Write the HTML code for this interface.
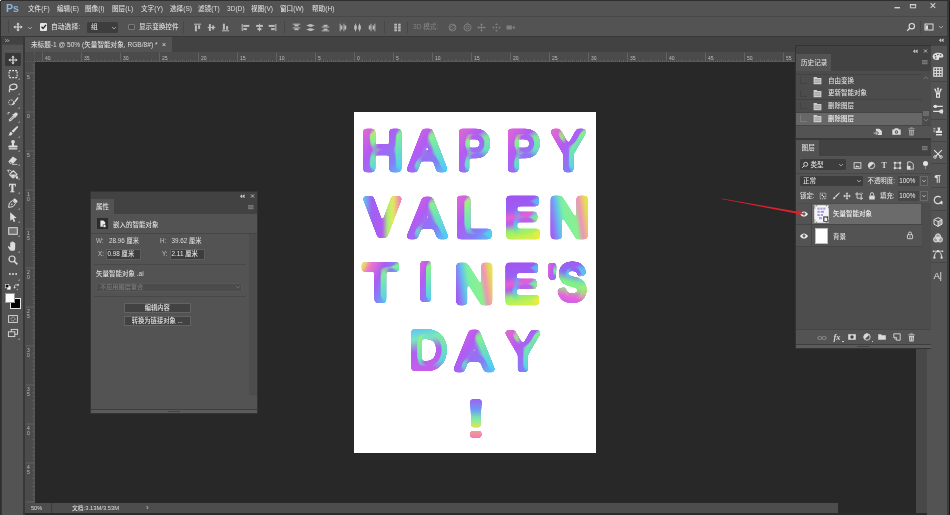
<!DOCTYPE html>
<html lang="zh-CN"><head><meta charset="utf-8"><title>Photoshop</title>
<style>
*{margin:0;padding:0;box-sizing:border-box}
html,body{width:950px;height:515px;overflow:hidden;background:#282828}
body{position:relative;-webkit-font-smoothing:antialiased;font-family:"Liberation Sans","Noto Sans CJK SC",sans-serif;font-size:6.6px;font-weight:500;color:#dedede;line-height:1}
.a{position:absolute}
.t{position:absolute;white-space:nowrap;line-height:8px;height:8px}
svg{position:absolute;overflow:visible}
.dim{color:#8a8a8a}
</style></head>
<body>
<div id="app" style="position:absolute;left:0;top:0;width:950px;height:515px;will-change:transform">
<div class="a" style="left:0px;top:0px;width:950px;height:515px;background:#282828;"></div>
<div class="a" style="left:0px;top:0px;width:950px;height:17px;background:#535353;"></div>
<div class="a" style="left:0px;top:16px;width:950px;height:1px;background:#484848;"></div>
<div class="t" style="left:6px;top:3px;height:11px;line-height:11px;font-size:10.6px;font-weight:bold;color:#8db4dc;letter-spacing:-0.1px">Ps</div>
<div class="t " style="left:28px;top:5px;">文件(F)</div>
<div class="t " style="left:57px;top:5px;">编辑(E)</div>
<div class="t " style="left:85px;top:5px;">图像(I)</div>
<div class="t " style="left:112px;top:5px;">图层(L)</div>
<div class="t " style="left:141px;top:5px;">文字(Y)</div>
<div class="t " style="left:170px;top:5px;">选择(S)</div>
<div class="t " style="left:198px;top:5px;">滤镜(T)</div>
<div class="t " style="left:227px;top:5px;">3D(D)</div>
<div class="t " style="left:251px;top:5px;">视图(V)</div>
<div class="t " style="left:280px;top:5px;">窗口(W)</div>
<div class="t " style="left:312px;top:5px;">帮助(H)</div>
<svg style="left:890px;top:0" width="60" height="17"><rect x="4.5" y="7" width="5.5" height="1.4" fill="#cfcfcf"/><rect x="20.4" y="4.6" width="5.2" height="3.2" fill="none" stroke="#cfcfcf" stroke-width="1"/><rect x="19.9" y="4" width="6.2" height="1.3" fill="#cfcfcf"/><path d="M40.6 3.2l4.6 4.6M45.2 3.2l-4.6 4.6" stroke="#cfcfcf" stroke-width="1.1" fill="none"/></svg>
<div class="a" style="left:0px;top:17px;width:950px;height:19px;background:#535353;"></div>
<div class="a" style="left:0px;top:36px;width:950px;height:1px;background:#383838;"></div>
<div class="a" style="left:0px;top:37px;width:950px;height:15px;background:#424242;"></div>
<div class="a" style="left:25px;top:37px;width:147px;height:15px;background:#535353;"></div>
<div class="t " style="left:31px;top:41px;">未标题-1 @ 50% (矢量智能对象, RGB/8#) *</div>
<div class="t " style="left:162px;top:41px;font-size:7px">×</div>
<div class="a" style="left:0px;top:37px;width:25px;height:478px;background:#383838;"></div>
<div class="a" style="left:2px;top:37px;width:21px;height:7px;background:#424242;"></div>
<svg style="left:5.2px;top:38.6px" width="6" height="4"><path d="M0.5 0.4l1.2 1.2-1.2 1.2M2.6 0.4l1.2 1.2-1.2 1.2" stroke="#d0d0d0" stroke-width="0.9" fill="none"/></svg>
<div class="a" style="left:2px;top:44px;width:21px;height:471px;background:#535353;"></div>
<div class="a" style="left:2px;top:44.2px;width:21px;height:0.8px;background:#474747;"></div>
<div class="a" style="left:4px;top:50.2px;width:17px;height:0.7px;background:#5c5c5c;"></div>
<div class="a" style="left:5px;top:53px;width:16px;height:13px;background:#383838;border-radius:1px"></div>
<svg style="left:5.5px;top:52.5px" width="14" height="14" viewBox="-7.0 -7.0 14 14"><path d="M0-4.6l1.7 2h-1.1v2h2v-1.1l2 1.7-2 1.7v-1.1h-2v2h1.1l-1.7 2-1.7-2h1.1v-2h-2v1.1l-2-1.7 2-1.7v1.1h2v-2h-1.1z" fill="#dcdcdc"/></svg>
<svg style="left:5.5px;top:66.5px" width="14" height="14" viewBox="-7.0 -7.0 14 14"><rect x="-3.9" y="-3.4" width="8" height="7" fill="none" stroke="#dcdcdc" stroke-width="1.1" stroke-dasharray="1.9 1.1"/></svg>
<svg style="left:18.1px;top:78.1px" width="2" height="2"><path d="M1.7 0v1.7h-1.7z" fill="#b4b4b4"/></svg>
<svg style="left:5.5px;top:81.0px" width="14" height="14" viewBox="-7.0 -7.0 14 14"><ellipse cx="0.6" cy="-1" rx="3.7" ry="2.7" fill="none" stroke="#dcdcdc" stroke-width="1.2" transform="rotate(-14)"/><path d="M-2.6 1c-1.3 0.5-1.5 1.8-0.7 3.2" fill="none" stroke="#dcdcdc" stroke-width="1.1"/><circle cx="-2.9" cy="1.3" r="0.9" fill="#dcdcdc"/></svg>
<svg style="left:18.1px;top:92.6px" width="2" height="2"><path d="M1.7 0v1.7h-1.7z" fill="#b4b4b4"/></svg>
<svg style="left:5.5px;top:95.0px" width="14" height="14" viewBox="-7.0 -7.0 14 14"><ellipse cx="-1.8" cy="0.4" rx="2.7" ry="2.5" fill="none" stroke="#dcdcdc" stroke-width="1" stroke-dasharray="1.5 0.9"/><path d="M1.2-0.6l3-3.8c0.6-0.7 1.7 0.2 1.1 0.9l-3 3.8z" fill="#dcdcdc"/><path d="M0.9 0l1.2 1c-0.5 1.5-1.8 2.2-3.5 2.1 0.8-0.5 0.8-1.2 1-1.8 0.2-0.7 0.7-1.2 1.3-1.3z" fill="#dcdcdc"/></svg>
<svg style="left:18.1px;top:106.6px" width="2" height="2"><path d="M1.7 0v1.7h-1.7z" fill="#b4b4b4"/></svg>
<svg style="left:5.5px;top:109.5px" width="14" height="14" viewBox="-7.0 -7.0 14 14"><path d="M-4.2 4.6l0.5-2.3 4.1-4.1 1.7 1.7-4.1 4.1z" fill="#dcdcdc"/><path d="M-2.9 3.2l3.6-3.6" stroke="#535353" stroke-width="0.7"/><path d="M0.2-2.6l1.2-1.2c0.9-0.9 2.1-0.9 2.8-0.2 0.7 0.7 0.7 1.9-0.2 2.8l-1.2 1.2z" fill="#dcdcdc"/><path d="M-0.4-2.6l3 3" stroke="#dcdcdc" stroke-width="1.2"/><path d="M-5-2.6v-1.8h1.8" fill="none" stroke="#dcdcdc" stroke-width="0.8"/></svg>
<svg style="left:18.1px;top:121.1px" width="2" height="2"><path d="M1.7 0v1.7h-1.7z" fill="#b4b4b4"/></svg>
<svg style="left:5.5px;top:124.0px" width="14" height="14" viewBox="-7.0 -7.0 14 14"><path d="M4.2-5l1.1 1.1-4.9 5.6-1.8-1.8z" fill="#dcdcdc"/><path d="M-2 0.8l1.6 1.6c-0.6 1.7-2.3 2.4-4.2 2.1 0.9-0.6 0.9-1.5 1.1-2.2 0.3-0.8 0.8-1.3 1.5-1.5z" fill="#dcdcdc"/></svg>
<svg style="left:18.1px;top:135.6px" width="2" height="2"><path d="M1.7 0v1.7h-1.7z" fill="#b4b4b4"/></svg>
<svg style="left:5.5px;top:138.0px" width="14" height="14" viewBox="-7.0 -7.0 14 14"><circle cx="0" cy="-3.2" r="1.9" fill="#dcdcdc"/><path d="M-0.9-2h1.8l0.3 2.4h2.4c0.6 0 1 0.4 1 1v1h-9.2v-1c0-0.6 0.4-1 1-1h2.4z" fill="#dcdcdc"/><rect x="-4.2" y="3.2" width="8.4" height="1.3" fill="#dcdcdc"/></svg>
<svg style="left:18.1px;top:149.6px" width="2" height="2"><path d="M1.7 0v1.7h-1.7z" fill="#b4b4b4"/></svg>
<svg style="left:5.5px;top:152.5px" width="14" height="14" viewBox="-7.0 -7.0 14 14"><path d="M-4.6 1.4l4.4-4.8 4.2 2.6-4 4.6h-3z" fill="#dcdcdc"/><path d="M-3.2 2l2.6 1.6" stroke="#535353" stroke-width="0.8"/><path d="M-1 4.4h5.4" stroke="#dcdcdc" stroke-width="0.8"/></svg>
<svg style="left:18.1px;top:164.1px" width="2" height="2"><path d="M1.7 0v1.7h-1.7z" fill="#b4b4b4"/></svg>
<svg style="left:5.5px;top:166.5px" width="14" height="14" viewBox="-7.0 -7.0 14 14"><path d="M-3-0.2l3.4-3 3.6 3.6-3.2 3.2c-0.4 0.4-1 0.4-1.4 0l-2.4-2.4c-0.4-0.4-0.4-1 0-1.4z" fill="none" stroke="#dcdcdc" stroke-width="1.1"/><path d="M-2.6 0.4h5.6l-2.6 2.6c-0.3 0.3-0.8 0.3-1.1 0z" fill="#dcdcdc"/><path d="M4 1.4c0.8 1 1.2 1.8 1.2 2.3 0 0.7-0.5 1.2-1.2 1.2s-1.2-0.5-1.2-1.2c0-0.5 0.4-1.3 1.2-2.3z" fill="#dcdcdc"/><path d="M-1-1.8c-0.8-1.4-1.8-2.4-2.8-2.2-0.9 0.2-0.9 1.4-0.3 2.6" fill="none" stroke="#dcdcdc" stroke-width="0.8"/><path d="M-5-4.4v1.8M-5.9-3.5h1.8" stroke="#dcdcdc" stroke-width="0.6"/></svg>
<svg style="left:18.1px;top:178.1px" width="2" height="2"><path d="M1.7 0v1.7h-1.7z" fill="#b4b4b4"/></svg>
<svg style="left:5.5px;top:196.0px" width="14" height="14" viewBox="-7.0 -7.0 14 14"><path d="M-4.4 4.4l0.8-4.4 3-2.4 3 3-2.4 3z" fill="none" stroke="#dcdcdc" stroke-width="1"/><path d="M-0.2-3l2-1.8 3 3-1.8 2z" fill="#dcdcdc"/><circle cx="-1.2" cy="1.2" r="0.8" fill="#dcdcdc"/></svg>
<svg style="left:18.1px;top:207.6px" width="2" height="2"><path d="M1.7 0v1.7h-1.7z" fill="#b4b4b4"/></svg>
<svg style="left:5.5px;top:209.5px" width="14" height="14" viewBox="-7.0 -7.0 14 14"><path d="M-2.8-4.8v8.6l2.1-1.9 1.5 3.1 1.5-0.7-1.5-3 2.8-0.2z" fill="#dcdcdc"/></svg>
<svg style="left:18.1px;top:221.1px" width="2" height="2"><path d="M1.7 0v1.7h-1.7z" fill="#b4b4b4"/></svg>
<svg style="left:5.5px;top:223.5px" width="14" height="14" viewBox="-7.0 -7.0 14 14"><rect x="-4.3" y="-3.3" width="8.6" height="6.6" fill="#727272" stroke="#dcdcdc" stroke-width="1"/></svg>
<svg style="left:18.1px;top:235.1px" width="2" height="2"><path d="M1.7 0v1.7h-1.7z" fill="#b4b4b4"/></svg>
<svg style="left:5.5px;top:239.0px" width="14" height="14" viewBox="-7.0 -7.0 14 14"><path d="M-2.4 4.8c-1-1.2-2-2.6-2.6-3.6-0.4-0.8 0.6-1.4 1.2-0.8l1 1v-4.4c0-0.9 1.2-0.9 1.2 0v-1c0-0.9 1.3-0.9 1.3 0v0.4c0-0.9 1.3-0.9 1.3 0v0.8c0-0.8 1.2-0.8 1.2 0v4.6c0 1.2-0.3 2.2-0.9 3z" fill="#dcdcdc"/></svg>
<svg style="left:18.1px;top:250.6px" width="2" height="2"><path d="M1.7 0v1.7h-1.7z" fill="#b4b4b4"/></svg>
<svg style="left:5.5px;top:252.5px" width="14" height="14" viewBox="-7.0 -7.0 14 14"><circle cx="-1" cy="-1" r="3" fill="none" stroke="#dcdcdc" stroke-width="1.2"/><path d="M1.2 1.2l3.2 3.2" stroke="#dcdcdc" stroke-width="1.5"/></svg>
<svg style="left:5.5px;top:267.0px" width="14" height="14" viewBox="-7.0 -7.0 14 14"><rect x="-4" y="-0.85" width="1.7" height="1.7" fill="#dcdcdc"/><rect x="-0.85" y="-0.85" width="1.7" height="1.7" fill="#dcdcdc"/><rect x="2.3" y="-0.85" width="1.7" height="1.7" fill="#dcdcdc"/></svg>
<svg style="left:18.1px;top:278.6px" width="2" height="2"><path d="M1.7 0v1.7h-1.7z" fill="#b4b4b4"/></svg>
<div class="t" style="left:8px;top:181.6px;width:9px;height:13px;line-height:13px;font-family:'Liberation Serif',serif;font-weight:bold;font-size:11.8px;color:#dcdcdc;text-align:center;transform:scaleX(0.86);-webkit-text-stroke:0.4px #dcdcdc">T</div>
<svg style="left:18.1px;top:192.1px" width="2" height="2"><path d="M1.7 0v1.7h-1.7z" fill="#b4b4b4"/></svg>
<svg style="left:3.5px;top:283.0px" width="8" height="8" viewBox="-4.0 -4.0 8 8"><rect x="-0.8" y="-0.8" width="3.4" height="3.4" fill="#fff"/><rect x="-2.6" y="-2.6" width="3.4" height="3.4" fill="#111" stroke="#e4e4e4" stroke-width="0.6"/></svg>
<svg style="left:13.0px;top:283.0px" width="8" height="8" viewBox="-4.0 -4.0 8 8"><path d="M-2.4 0.2v-1.4c0-0.5 0.4-0.9 0.9-0.9h2.5M1 2.6h-1.2" fill="none" stroke="#dcdcdc" stroke-width="0.8"/><path d="M0.6-3.4l1.8 1.3-1.8 1.3zM-3.6 0l1.2 1.8 1.2-1.8z" fill="#dcdcdc"/><path d="M2.4 3.2" /><path d="M-2.4 0v1.6c0 0.5 0.4 0.9 0.9 0.9h2.6" fill="none" stroke="#dcdcdc" stroke-width="0"/></svg>
<div class="a" style="left:10.1px;top:298.4px;width:10.6px;height:10.4px;background:#000;border:0.8px solid #e6e6e6"></div>
<div class="a" style="left:4.6px;top:292.6px;width:10.6px;height:10.6px;background:#fff;border:0.6px solid #9a9a9a"></div>
<svg style="left:5.5px;top:311.5px" width="14" height="14" viewBox="-7.0 -7.0 14 14"><rect x="-4.4" y="-3.4" width="8.8" height="6.8" fill="none" stroke="#dcdcdc" stroke-width="0.9"/><circle r="1.9" fill="none" stroke="#dcdcdc" stroke-width="0.8" stroke-dasharray="1 0.7"/></svg>
<svg style="left:5.5px;top:326.0px" width="14" height="14" viewBox="-7.0 -7.0 14 14"><rect x="-1.8" y="-3.6" width="6.4" height="4.8" fill="none" stroke="#dcdcdc" stroke-width="0.9"/><rect x="-4.6" y="-1.2" width="6.4" height="4.8" fill="#535353" stroke="#dcdcdc" stroke-width="0.9"/></svg>
<svg style="left:18.1px;top:337.6px" width="2" height="2"><path d="M1.7 0v1.7h-1.7z" fill="#b4b4b4"/></svg>
<div class="a" style="left:25px;top:52px;width:891px;height:10px;background:#4b4b4b;"></div>
<div class="a" style="left:25px;top:52px;width:9.5px;height:451px;background:#4b4b4b;"></div>
<svg style="left:0;top:0" width="950" height="515"><rect x="38.3" y="60.0" width="0.7" height="1.6" fill="#626262"/><rect x="42.2" y="52.6" width="0.8" height="9" fill="#686868"/><rect x="46.1" y="60.0" width="0.7" height="1.6" fill="#626262"/><rect x="50.0" y="59.0" width="0.7" height="2.6" fill="#626262"/><rect x="53.9" y="60.0" width="0.7" height="1.6" fill="#626262"/><rect x="57.8" y="59.0" width="0.7" height="2.6" fill="#626262"/><rect x="61.7" y="60.0" width="0.7" height="1.6" fill="#626262"/><rect x="65.6" y="59.0" width="0.7" height="2.6" fill="#626262"/><rect x="69.5" y="60.0" width="0.7" height="1.6" fill="#626262"/><rect x="73.4" y="59.0" width="0.7" height="2.6" fill="#626262"/><rect x="77.3" y="60.0" width="0.7" height="1.6" fill="#626262"/><rect x="81.2" y="52.6" width="0.8" height="9" fill="#686868"/><rect x="85.1" y="60.0" width="0.7" height="1.6" fill="#626262"/><rect x="89.0" y="59.0" width="0.7" height="2.6" fill="#626262"/><rect x="92.9" y="60.0" width="0.7" height="1.6" fill="#626262"/><rect x="96.8" y="59.0" width="0.7" height="2.6" fill="#626262"/><rect x="100.7" y="60.0" width="0.7" height="1.6" fill="#626262"/><rect x="104.6" y="59.0" width="0.7" height="2.6" fill="#626262"/><rect x="108.5" y="60.0" width="0.7" height="1.6" fill="#626262"/><rect x="112.4" y="59.0" width="0.7" height="2.6" fill="#626262"/><rect x="116.3" y="60.0" width="0.7" height="1.6" fill="#626262"/><rect x="120.2" y="52.6" width="0.8" height="9" fill="#686868"/><rect x="124.1" y="60.0" width="0.7" height="1.6" fill="#626262"/><rect x="128.0" y="59.0" width="0.7" height="2.6" fill="#626262"/><rect x="131.9" y="60.0" width="0.7" height="1.6" fill="#626262"/><rect x="135.8" y="59.0" width="0.7" height="2.6" fill="#626262"/><rect x="139.7" y="60.0" width="0.7" height="1.6" fill="#626262"/><rect x="143.6" y="59.0" width="0.7" height="2.6" fill="#626262"/><rect x="147.5" y="60.0" width="0.7" height="1.6" fill="#626262"/><rect x="151.4" y="59.0" width="0.7" height="2.6" fill="#626262"/><rect x="155.3" y="60.0" width="0.7" height="1.6" fill="#626262"/><rect x="159.2" y="52.6" width="0.8" height="9" fill="#686868"/><rect x="163.1" y="60.0" width="0.7" height="1.6" fill="#626262"/><rect x="167.0" y="59.0" width="0.7" height="2.6" fill="#626262"/><rect x="170.9" y="60.0" width="0.7" height="1.6" fill="#626262"/><rect x="174.8" y="59.0" width="0.7" height="2.6" fill="#626262"/><rect x="178.7" y="60.0" width="0.7" height="1.6" fill="#626262"/><rect x="182.6" y="59.0" width="0.7" height="2.6" fill="#626262"/><rect x="186.5" y="60.0" width="0.7" height="1.6" fill="#626262"/><rect x="190.4" y="59.0" width="0.7" height="2.6" fill="#626262"/><rect x="194.3" y="60.0" width="0.7" height="1.6" fill="#626262"/><rect x="198.2" y="52.6" width="0.8" height="9" fill="#686868"/><rect x="202.1" y="60.0" width="0.7" height="1.6" fill="#626262"/><rect x="206.0" y="59.0" width="0.7" height="2.6" fill="#626262"/><rect x="209.9" y="60.0" width="0.7" height="1.6" fill="#626262"/><rect x="213.8" y="59.0" width="0.7" height="2.6" fill="#626262"/><rect x="217.7" y="60.0" width="0.7" height="1.6" fill="#626262"/><rect x="221.6" y="59.0" width="0.7" height="2.6" fill="#626262"/><rect x="225.5" y="60.0" width="0.7" height="1.6" fill="#626262"/><rect x="229.4" y="59.0" width="0.7" height="2.6" fill="#626262"/><rect x="233.3" y="60.0" width="0.7" height="1.6" fill="#626262"/><rect x="237.2" y="52.6" width="0.8" height="9" fill="#686868"/><rect x="241.1" y="60.0" width="0.7" height="1.6" fill="#626262"/><rect x="245.0" y="59.0" width="0.7" height="2.6" fill="#626262"/><rect x="248.9" y="60.0" width="0.7" height="1.6" fill="#626262"/><rect x="252.8" y="59.0" width="0.7" height="2.6" fill="#626262"/><rect x="256.7" y="60.0" width="0.7" height="1.6" fill="#626262"/><rect x="260.6" y="59.0" width="0.7" height="2.6" fill="#626262"/><rect x="264.5" y="60.0" width="0.7" height="1.6" fill="#626262"/><rect x="268.4" y="59.0" width="0.7" height="2.6" fill="#626262"/><rect x="272.3" y="60.0" width="0.7" height="1.6" fill="#626262"/><rect x="276.2" y="52.6" width="0.8" height="9" fill="#686868"/><rect x="280.1" y="60.0" width="0.7" height="1.6" fill="#626262"/><rect x="284.0" y="59.0" width="0.7" height="2.6" fill="#626262"/><rect x="287.9" y="60.0" width="0.7" height="1.6" fill="#626262"/><rect x="291.8" y="59.0" width="0.7" height="2.6" fill="#626262"/><rect x="295.7" y="60.0" width="0.7" height="1.6" fill="#626262"/><rect x="299.6" y="59.0" width="0.7" height="2.6" fill="#626262"/><rect x="303.5" y="60.0" width="0.7" height="1.6" fill="#626262"/><rect x="307.4" y="59.0" width="0.7" height="2.6" fill="#626262"/><rect x="311.3" y="60.0" width="0.7" height="1.6" fill="#626262"/><rect x="315.2" y="52.6" width="0.8" height="9" fill="#686868"/><rect x="319.1" y="60.0" width="0.7" height="1.6" fill="#626262"/><rect x="323.0" y="59.0" width="0.7" height="2.6" fill="#626262"/><rect x="326.9" y="60.0" width="0.7" height="1.6" fill="#626262"/><rect x="330.8" y="59.0" width="0.7" height="2.6" fill="#626262"/><rect x="334.7" y="60.0" width="0.7" height="1.6" fill="#626262"/><rect x="338.6" y="59.0" width="0.7" height="2.6" fill="#626262"/><rect x="342.5" y="60.0" width="0.7" height="1.6" fill="#626262"/><rect x="346.4" y="59.0" width="0.7" height="2.6" fill="#626262"/><rect x="350.3" y="60.0" width="0.7" height="1.6" fill="#626262"/><rect x="354.2" y="52.6" width="0.8" height="9" fill="#686868"/><rect x="358.1" y="60.0" width="0.7" height="1.6" fill="#626262"/><rect x="362.0" y="59.0" width="0.7" height="2.6" fill="#626262"/><rect x="365.9" y="60.0" width="0.7" height="1.6" fill="#626262"/><rect x="369.8" y="59.0" width="0.7" height="2.6" fill="#626262"/><rect x="373.7" y="60.0" width="0.7" height="1.6" fill="#626262"/><rect x="377.6" y="59.0" width="0.7" height="2.6" fill="#626262"/><rect x="381.5" y="60.0" width="0.7" height="1.6" fill="#626262"/><rect x="385.4" y="59.0" width="0.7" height="2.6" fill="#626262"/><rect x="389.3" y="60.0" width="0.7" height="1.6" fill="#626262"/><rect x="393.2" y="52.6" width="0.8" height="9" fill="#686868"/><rect x="397.1" y="60.0" width="0.7" height="1.6" fill="#626262"/><rect x="401.0" y="59.0" width="0.7" height="2.6" fill="#626262"/><rect x="404.9" y="60.0" width="0.7" height="1.6" fill="#626262"/><rect x="408.8" y="59.0" width="0.7" height="2.6" fill="#626262"/><rect x="412.7" y="60.0" width="0.7" height="1.6" fill="#626262"/><rect x="416.6" y="59.0" width="0.7" height="2.6" fill="#626262"/><rect x="420.5" y="60.0" width="0.7" height="1.6" fill="#626262"/><rect x="424.4" y="59.0" width="0.7" height="2.6" fill="#626262"/><rect x="428.3" y="60.0" width="0.7" height="1.6" fill="#626262"/><rect x="432.2" y="52.6" width="0.8" height="9" fill="#686868"/><rect x="436.1" y="60.0" width="0.7" height="1.6" fill="#626262"/><rect x="440.0" y="59.0" width="0.7" height="2.6" fill="#626262"/><rect x="443.9" y="60.0" width="0.7" height="1.6" fill="#626262"/><rect x="447.8" y="59.0" width="0.7" height="2.6" fill="#626262"/><rect x="451.7" y="60.0" width="0.7" height="1.6" fill="#626262"/><rect x="455.6" y="59.0" width="0.7" height="2.6" fill="#626262"/><rect x="459.5" y="60.0" width="0.7" height="1.6" fill="#626262"/><rect x="463.4" y="59.0" width="0.7" height="2.6" fill="#626262"/><rect x="467.3" y="60.0" width="0.7" height="1.6" fill="#626262"/><rect x="471.2" y="52.6" width="0.8" height="9" fill="#686868"/><rect x="475.1" y="60.0" width="0.7" height="1.6" fill="#626262"/><rect x="479.0" y="59.0" width="0.7" height="2.6" fill="#626262"/><rect x="482.9" y="60.0" width="0.7" height="1.6" fill="#626262"/><rect x="486.8" y="59.0" width="0.7" height="2.6" fill="#626262"/><rect x="490.7" y="60.0" width="0.7" height="1.6" fill="#626262"/><rect x="494.6" y="59.0" width="0.7" height="2.6" fill="#626262"/><rect x="498.5" y="60.0" width="0.7" height="1.6" fill="#626262"/><rect x="502.4" y="59.0" width="0.7" height="2.6" fill="#626262"/><rect x="506.3" y="60.0" width="0.7" height="1.6" fill="#626262"/><rect x="510.2" y="52.6" width="0.8" height="9" fill="#686868"/><rect x="514.1" y="60.0" width="0.7" height="1.6" fill="#626262"/><rect x="518.0" y="59.0" width="0.7" height="2.6" fill="#626262"/><rect x="521.9" y="60.0" width="0.7" height="1.6" fill="#626262"/><rect x="525.8" y="59.0" width="0.7" height="2.6" fill="#626262"/><rect x="529.7" y="60.0" width="0.7" height="1.6" fill="#626262"/><rect x="533.6" y="59.0" width="0.7" height="2.6" fill="#626262"/><rect x="537.5" y="60.0" width="0.7" height="1.6" fill="#626262"/><rect x="541.4" y="59.0" width="0.7" height="2.6" fill="#626262"/><rect x="545.3" y="60.0" width="0.7" height="1.6" fill="#626262"/><rect x="549.2" y="52.6" width="0.8" height="9" fill="#686868"/><rect x="553.1" y="60.0" width="0.7" height="1.6" fill="#626262"/><rect x="557.0" y="59.0" width="0.7" height="2.6" fill="#626262"/><rect x="560.9" y="60.0" width="0.7" height="1.6" fill="#626262"/><rect x="564.8" y="59.0" width="0.7" height="2.6" fill="#626262"/><rect x="568.7" y="60.0" width="0.7" height="1.6" fill="#626262"/><rect x="572.6" y="59.0" width="0.7" height="2.6" fill="#626262"/><rect x="576.5" y="60.0" width="0.7" height="1.6" fill="#626262"/><rect x="580.4" y="59.0" width="0.7" height="2.6" fill="#626262"/><rect x="584.3" y="60.0" width="0.7" height="1.6" fill="#626262"/><rect x="588.2" y="52.6" width="0.8" height="9" fill="#686868"/><rect x="592.1" y="60.0" width="0.7" height="1.6" fill="#626262"/><rect x="596.0" y="59.0" width="0.7" height="2.6" fill="#626262"/><rect x="599.9" y="60.0" width="0.7" height="1.6" fill="#626262"/><rect x="603.8" y="59.0" width="0.7" height="2.6" fill="#626262"/><rect x="607.7" y="60.0" width="0.7" height="1.6" fill="#626262"/><rect x="611.6" y="59.0" width="0.7" height="2.6" fill="#626262"/><rect x="615.5" y="60.0" width="0.7" height="1.6" fill="#626262"/><rect x="619.4" y="59.0" width="0.7" height="2.6" fill="#626262"/><rect x="623.3" y="60.0" width="0.7" height="1.6" fill="#626262"/><rect x="627.2" y="52.6" width="0.8" height="9" fill="#686868"/><rect x="631.1" y="60.0" width="0.7" height="1.6" fill="#626262"/><rect x="635.0" y="59.0" width="0.7" height="2.6" fill="#626262"/><rect x="638.9" y="60.0" width="0.7" height="1.6" fill="#626262"/><rect x="642.8" y="59.0" width="0.7" height="2.6" fill="#626262"/><rect x="646.7" y="60.0" width="0.7" height="1.6" fill="#626262"/><rect x="650.6" y="59.0" width="0.7" height="2.6" fill="#626262"/><rect x="654.5" y="60.0" width="0.7" height="1.6" fill="#626262"/><rect x="658.4" y="59.0" width="0.7" height="2.6" fill="#626262"/><rect x="662.3" y="60.0" width="0.7" height="1.6" fill="#626262"/><rect x="666.2" y="52.6" width="0.8" height="9" fill="#686868"/><rect x="670.1" y="60.0" width="0.7" height="1.6" fill="#626262"/><rect x="674.0" y="59.0" width="0.7" height="2.6" fill="#626262"/><rect x="677.9" y="60.0" width="0.7" height="1.6" fill="#626262"/><rect x="681.8" y="59.0" width="0.7" height="2.6" fill="#626262"/><rect x="685.7" y="60.0" width="0.7" height="1.6" fill="#626262"/><rect x="689.6" y="59.0" width="0.7" height="2.6" fill="#626262"/><rect x="693.5" y="60.0" width="0.7" height="1.6" fill="#626262"/><rect x="697.4" y="59.0" width="0.7" height="2.6" fill="#626262"/><rect x="701.3" y="60.0" width="0.7" height="1.6" fill="#626262"/><rect x="705.2" y="52.6" width="0.8" height="9" fill="#686868"/><rect x="709.1" y="60.0" width="0.7" height="1.6" fill="#626262"/><rect x="713.0" y="59.0" width="0.7" height="2.6" fill="#626262"/><rect x="716.9" y="60.0" width="0.7" height="1.6" fill="#626262"/><rect x="720.8" y="59.0" width="0.7" height="2.6" fill="#626262"/><rect x="724.7" y="60.0" width="0.7" height="1.6" fill="#626262"/><rect x="728.6" y="59.0" width="0.7" height="2.6" fill="#626262"/><rect x="732.5" y="60.0" width="0.7" height="1.6" fill="#626262"/><rect x="736.4" y="59.0" width="0.7" height="2.6" fill="#626262"/><rect x="740.3" y="60.0" width="0.7" height="1.6" fill="#626262"/><rect x="744.2" y="52.6" width="0.8" height="9" fill="#686868"/><rect x="748.1" y="60.0" width="0.7" height="1.6" fill="#626262"/><rect x="752.0" y="59.0" width="0.7" height="2.6" fill="#626262"/><rect x="755.9" y="60.0" width="0.7" height="1.6" fill="#626262"/><rect x="759.8" y="59.0" width="0.7" height="2.6" fill="#626262"/><rect x="763.7" y="60.0" width="0.7" height="1.6" fill="#626262"/><rect x="767.6" y="59.0" width="0.7" height="2.6" fill="#626262"/><rect x="771.5" y="60.0" width="0.7" height="1.6" fill="#626262"/><rect x="775.4" y="59.0" width="0.7" height="2.6" fill="#626262"/><rect x="779.3" y="60.0" width="0.7" height="1.6" fill="#626262"/><rect x="783.2" y="52.6" width="0.8" height="9" fill="#686868"/><rect x="787.1" y="60.0" width="0.7" height="1.6" fill="#626262"/><rect x="791.0" y="59.0" width="0.7" height="2.6" fill="#626262"/><rect x="794.9" y="60.0" width="0.7" height="1.6" fill="#626262"/><rect x="798.8" y="59.0" width="0.7" height="2.6" fill="#626262"/><rect x="802.7" y="60.0" width="0.7" height="1.6" fill="#626262"/><rect x="806.6" y="59.0" width="0.7" height="2.6" fill="#626262"/><rect x="810.5" y="60.0" width="0.7" height="1.6" fill="#626262"/><rect x="814.4" y="59.0" width="0.7" height="2.6" fill="#626262"/><rect x="818.3" y="60.0" width="0.7" height="1.6" fill="#626262"/><rect x="822.2" y="52.6" width="0.8" height="9" fill="#686868"/><rect x="826.1" y="60.0" width="0.7" height="1.6" fill="#626262"/><rect x="830.0" y="59.0" width="0.7" height="2.6" fill="#626262"/><rect x="833.9" y="60.0" width="0.7" height="1.6" fill="#626262"/><rect x="837.8" y="59.0" width="0.7" height="2.6" fill="#626262"/><rect x="841.7" y="60.0" width="0.7" height="1.6" fill="#626262"/><rect x="845.6" y="59.0" width="0.7" height="2.6" fill="#626262"/><rect x="849.5" y="60.0" width="0.7" height="1.6" fill="#626262"/><rect x="853.4" y="59.0" width="0.7" height="2.6" fill="#626262"/><rect x="857.3" y="60.0" width="0.7" height="1.6" fill="#626262"/><rect x="861.2" y="52.6" width="0.8" height="9" fill="#686868"/><rect x="865.1" y="60.0" width="0.7" height="1.6" fill="#626262"/><rect x="869.0" y="59.0" width="0.7" height="2.6" fill="#626262"/><rect x="872.9" y="60.0" width="0.7" height="1.6" fill="#626262"/><rect x="876.8" y="59.0" width="0.7" height="2.6" fill="#626262"/><rect x="880.7" y="60.0" width="0.7" height="1.6" fill="#626262"/><rect x="884.6" y="59.0" width="0.7" height="2.6" fill="#626262"/><rect x="888.5" y="60.0" width="0.7" height="1.6" fill="#626262"/><rect x="892.4" y="59.0" width="0.7" height="2.6" fill="#626262"/><rect x="896.3" y="60.0" width="0.7" height="1.6" fill="#626262"/><rect x="900.2" y="52.6" width="0.8" height="9" fill="#686868"/><rect x="904.1" y="60.0" width="0.7" height="1.6" fill="#626262"/><rect x="908.0" y="59.0" width="0.7" height="2.6" fill="#626262"/><rect x="911.9" y="60.0" width="0.7" height="1.6" fill="#626262"/><rect x="915.8" y="59.0" width="0.7" height="2.6" fill="#626262"/><rect x="32.0" y="64.8" width="2.6" height="0.7" fill="#626262"/><rect x="33.0" y="68.7" width="1.6" height="0.7" fill="#626262"/><rect x="25.6" y="72.6" width="9" height="0.8" fill="#686868"/><rect x="33.0" y="76.5" width="1.6" height="0.7" fill="#626262"/><rect x="32.0" y="80.4" width="2.6" height="0.7" fill="#626262"/><rect x="33.0" y="84.3" width="1.6" height="0.7" fill="#626262"/><rect x="32.0" y="88.2" width="2.6" height="0.7" fill="#626262"/><rect x="33.0" y="92.1" width="1.6" height="0.7" fill="#626262"/><rect x="32.0" y="96.0" width="2.6" height="0.7" fill="#626262"/><rect x="33.0" y="99.9" width="1.6" height="0.7" fill="#626262"/><rect x="32.0" y="103.8" width="2.6" height="0.7" fill="#626262"/><rect x="33.0" y="107.7" width="1.6" height="0.7" fill="#626262"/><rect x="25.6" y="111.6" width="9" height="0.8" fill="#686868"/><rect x="33.0" y="115.5" width="1.6" height="0.7" fill="#626262"/><rect x="32.0" y="119.4" width="2.6" height="0.7" fill="#626262"/><rect x="33.0" y="123.3" width="1.6" height="0.7" fill="#626262"/><rect x="32.0" y="127.2" width="2.6" height="0.7" fill="#626262"/><rect x="33.0" y="131.1" width="1.6" height="0.7" fill="#626262"/><rect x="32.0" y="135.0" width="2.6" height="0.7" fill="#626262"/><rect x="33.0" y="138.9" width="1.6" height="0.7" fill="#626262"/><rect x="32.0" y="142.8" width="2.6" height="0.7" fill="#626262"/><rect x="33.0" y="146.7" width="1.6" height="0.7" fill="#626262"/><rect x="25.6" y="150.6" width="9" height="0.8" fill="#686868"/><rect x="33.0" y="154.5" width="1.6" height="0.7" fill="#626262"/><rect x="32.0" y="158.4" width="2.6" height="0.7" fill="#626262"/><rect x="33.0" y="162.3" width="1.6" height="0.7" fill="#626262"/><rect x="32.0" y="166.2" width="2.6" height="0.7" fill="#626262"/><rect x="33.0" y="170.1" width="1.6" height="0.7" fill="#626262"/><rect x="32.0" y="174.0" width="2.6" height="0.7" fill="#626262"/><rect x="33.0" y="177.9" width="1.6" height="0.7" fill="#626262"/><rect x="32.0" y="181.8" width="2.6" height="0.7" fill="#626262"/><rect x="33.0" y="185.7" width="1.6" height="0.7" fill="#626262"/><rect x="25.6" y="189.6" width="9" height="0.8" fill="#686868"/><rect x="33.0" y="193.5" width="1.6" height="0.7" fill="#626262"/><rect x="32.0" y="197.4" width="2.6" height="0.7" fill="#626262"/><rect x="33.0" y="201.3" width="1.6" height="0.7" fill="#626262"/><rect x="32.0" y="205.2" width="2.6" height="0.7" fill="#626262"/><rect x="33.0" y="209.1" width="1.6" height="0.7" fill="#626262"/><rect x="32.0" y="213.0" width="2.6" height="0.7" fill="#626262"/><rect x="33.0" y="216.9" width="1.6" height="0.7" fill="#626262"/><rect x="32.0" y="220.8" width="2.6" height="0.7" fill="#626262"/><rect x="33.0" y="224.7" width="1.6" height="0.7" fill="#626262"/><rect x="25.6" y="228.6" width="9" height="0.8" fill="#686868"/><rect x="33.0" y="232.5" width="1.6" height="0.7" fill="#626262"/><rect x="32.0" y="236.4" width="2.6" height="0.7" fill="#626262"/><rect x="33.0" y="240.3" width="1.6" height="0.7" fill="#626262"/><rect x="32.0" y="244.2" width="2.6" height="0.7" fill="#626262"/><rect x="33.0" y="248.1" width="1.6" height="0.7" fill="#626262"/><rect x="32.0" y="252.0" width="2.6" height="0.7" fill="#626262"/><rect x="33.0" y="255.9" width="1.6" height="0.7" fill="#626262"/><rect x="32.0" y="259.8" width="2.6" height="0.7" fill="#626262"/><rect x="33.0" y="263.7" width="1.6" height="0.7" fill="#626262"/><rect x="25.6" y="267.6" width="9" height="0.8" fill="#686868"/><rect x="33.0" y="271.5" width="1.6" height="0.7" fill="#626262"/><rect x="32.0" y="275.4" width="2.6" height="0.7" fill="#626262"/><rect x="33.0" y="279.3" width="1.6" height="0.7" fill="#626262"/><rect x="32.0" y="283.2" width="2.6" height="0.7" fill="#626262"/><rect x="33.0" y="287.1" width="1.6" height="0.7" fill="#626262"/><rect x="32.0" y="291.0" width="2.6" height="0.7" fill="#626262"/><rect x="33.0" y="294.9" width="1.6" height="0.7" fill="#626262"/><rect x="32.0" y="298.8" width="2.6" height="0.7" fill="#626262"/><rect x="33.0" y="302.7" width="1.6" height="0.7" fill="#626262"/><rect x="25.6" y="306.6" width="9" height="0.8" fill="#686868"/><rect x="33.0" y="310.5" width="1.6" height="0.7" fill="#626262"/><rect x="32.0" y="314.4" width="2.6" height="0.7" fill="#626262"/><rect x="33.0" y="318.3" width="1.6" height="0.7" fill="#626262"/><rect x="32.0" y="322.2" width="2.6" height="0.7" fill="#626262"/><rect x="33.0" y="326.1" width="1.6" height="0.7" fill="#626262"/><rect x="32.0" y="330.0" width="2.6" height="0.7" fill="#626262"/><rect x="33.0" y="333.9" width="1.6" height="0.7" fill="#626262"/><rect x="32.0" y="337.8" width="2.6" height="0.7" fill="#626262"/><rect x="33.0" y="341.7" width="1.6" height="0.7" fill="#626262"/><rect x="25.6" y="345.6" width="9" height="0.8" fill="#686868"/><rect x="33.0" y="349.5" width="1.6" height="0.7" fill="#626262"/><rect x="32.0" y="353.4" width="2.6" height="0.7" fill="#626262"/><rect x="33.0" y="357.3" width="1.6" height="0.7" fill="#626262"/><rect x="32.0" y="361.2" width="2.6" height="0.7" fill="#626262"/><rect x="33.0" y="365.1" width="1.6" height="0.7" fill="#626262"/><rect x="32.0" y="369.0" width="2.6" height="0.7" fill="#626262"/><rect x="33.0" y="372.9" width="1.6" height="0.7" fill="#626262"/><rect x="32.0" y="376.8" width="2.6" height="0.7" fill="#626262"/><rect x="33.0" y="380.7" width="1.6" height="0.7" fill="#626262"/><rect x="25.6" y="384.6" width="9" height="0.8" fill="#686868"/><rect x="33.0" y="388.5" width="1.6" height="0.7" fill="#626262"/><rect x="32.0" y="392.4" width="2.6" height="0.7" fill="#626262"/><rect x="33.0" y="396.3" width="1.6" height="0.7" fill="#626262"/><rect x="32.0" y="400.2" width="2.6" height="0.7" fill="#626262"/><rect x="33.0" y="404.1" width="1.6" height="0.7" fill="#626262"/><rect x="32.0" y="408.0" width="2.6" height="0.7" fill="#626262"/><rect x="33.0" y="411.9" width="1.6" height="0.7" fill="#626262"/><rect x="32.0" y="415.8" width="2.6" height="0.7" fill="#626262"/><rect x="33.0" y="419.7" width="1.6" height="0.7" fill="#626262"/><rect x="25.6" y="423.6" width="9" height="0.8" fill="#686868"/><rect x="33.0" y="427.5" width="1.6" height="0.7" fill="#626262"/><rect x="32.0" y="431.4" width="2.6" height="0.7" fill="#626262"/><rect x="33.0" y="435.3" width="1.6" height="0.7" fill="#626262"/><rect x="32.0" y="439.2" width="2.6" height="0.7" fill="#626262"/><rect x="33.0" y="443.1" width="1.6" height="0.7" fill="#626262"/><rect x="32.0" y="447.0" width="2.6" height="0.7" fill="#626262"/><rect x="33.0" y="450.9" width="1.6" height="0.7" fill="#626262"/><rect x="32.0" y="454.8" width="2.6" height="0.7" fill="#626262"/><rect x="33.0" y="458.7" width="1.6" height="0.7" fill="#626262"/><rect x="25.6" y="462.6" width="9" height="0.8" fill="#686868"/><rect x="33.0" y="466.5" width="1.6" height="0.7" fill="#626262"/><rect x="32.0" y="470.4" width="2.6" height="0.7" fill="#626262"/><rect x="33.0" y="474.3" width="1.6" height="0.7" fill="#626262"/><rect x="32.0" y="478.2" width="2.6" height="0.7" fill="#626262"/><rect x="33.0" y="482.1" width="1.6" height="0.7" fill="#626262"/><rect x="32.0" y="486.0" width="2.6" height="0.7" fill="#626262"/><rect x="33.0" y="489.9" width="1.6" height="0.7" fill="#626262"/><rect x="32.0" y="493.8" width="2.6" height="0.7" fill="#626262"/><rect x="33.0" y="497.7" width="1.6" height="0.7" fill="#626262"/><rect x="25.6" y="501.6" width="9" height="0.8" fill="#686868"/></svg>
<div class="t" style="left:45.1px;top:54.8px;height:6px;line-height:6px;font-size:5px;color:#bcbcbc">40</div>
<div class="t" style="left:84.1px;top:54.8px;height:6px;line-height:6px;font-size:5px;color:#bcbcbc">35</div>
<div class="t" style="left:123.1px;top:54.8px;height:6px;line-height:6px;font-size:5px;color:#bcbcbc">30</div>
<div class="t" style="left:162.1px;top:54.8px;height:6px;line-height:6px;font-size:5px;color:#bcbcbc">25</div>
<div class="t" style="left:201.1px;top:54.8px;height:6px;line-height:6px;font-size:5px;color:#bcbcbc">20</div>
<div class="t" style="left:240.1px;top:54.8px;height:6px;line-height:6px;font-size:5px;color:#bcbcbc">15</div>
<div class="t" style="left:279.1px;top:54.8px;height:6px;line-height:6px;font-size:5px;color:#bcbcbc">10</div>
<div class="t" style="left:318.1px;top:54.8px;height:6px;line-height:6px;font-size:5px;color:#bcbcbc">5</div>
<div class="t" style="left:357.1px;top:54.8px;height:6px;line-height:6px;font-size:5px;color:#bcbcbc">0</div>
<div class="t" style="left:396.1px;top:54.8px;height:6px;line-height:6px;font-size:5px;color:#bcbcbc">5</div>
<div class="t" style="left:435.1px;top:54.8px;height:6px;line-height:6px;font-size:5px;color:#bcbcbc">10</div>
<div class="t" style="left:474.1px;top:54.8px;height:6px;line-height:6px;font-size:5px;color:#bcbcbc">15</div>
<div class="t" style="left:513.1px;top:54.8px;height:6px;line-height:6px;font-size:5px;color:#bcbcbc">20</div>
<div class="t" style="left:552.1px;top:54.8px;height:6px;line-height:6px;font-size:5px;color:#bcbcbc">25</div>
<div class="t" style="left:591.1px;top:54.8px;height:6px;line-height:6px;font-size:5px;color:#bcbcbc">30</div>
<div class="t" style="left:630.1px;top:54.8px;height:6px;line-height:6px;font-size:5px;color:#bcbcbc">35</div>
<div class="t" style="left:669.1px;top:54.8px;height:6px;line-height:6px;font-size:5px;color:#bcbcbc">40</div>
<div class="t" style="left:708.1px;top:54.8px;height:6px;line-height:6px;font-size:5px;color:#bcbcbc">45</div>
<div class="t" style="left:747.1px;top:54.8px;height:6px;line-height:6px;font-size:5px;color:#bcbcbc">50</div>
<div class="t" style="left:786.1px;top:54.8px;height:6px;line-height:6px;font-size:5px;color:#bcbcbc">55</div>
<div class="a" style="left:26.4px;top:75.2px;width:4px;font-size:5px;color:#bcbcbc;text-align:center"><span style="display:block;height:4.6px;line-height:4.6px">5</span></div>
<div class="a" style="left:26.4px;top:114.2px;width:4px;font-size:5px;color:#bcbcbc;text-align:center"><span style="display:block;height:4.6px;line-height:4.6px">0</span></div>
<div class="a" style="left:26.4px;top:153.2px;width:4px;font-size:5px;color:#bcbcbc;text-align:center"><span style="display:block;height:4.6px;line-height:4.6px">5</span></div>
<div class="a" style="left:26.4px;top:192.2px;width:4px;font-size:5px;color:#bcbcbc;text-align:center"><span style="display:block;height:4.6px;line-height:4.6px">1</span><span style="display:block;height:4.6px;line-height:4.6px">0</span></div>
<div class="a" style="left:26.4px;top:231.2px;width:4px;font-size:5px;color:#bcbcbc;text-align:center"><span style="display:block;height:4.6px;line-height:4.6px">1</span><span style="display:block;height:4.6px;line-height:4.6px">5</span></div>
<div class="a" style="left:26.4px;top:270.2px;width:4px;font-size:5px;color:#bcbcbc;text-align:center"><span style="display:block;height:4.6px;line-height:4.6px">2</span><span style="display:block;height:4.6px;line-height:4.6px">0</span></div>
<div class="a" style="left:26.4px;top:309.2px;width:4px;font-size:5px;color:#bcbcbc;text-align:center"><span style="display:block;height:4.6px;line-height:4.6px">2</span><span style="display:block;height:4.6px;line-height:4.6px">5</span></div>
<div class="a" style="left:26.4px;top:348.2px;width:4px;font-size:5px;color:#bcbcbc;text-align:center"><span style="display:block;height:4.6px;line-height:4.6px">3</span><span style="display:block;height:4.6px;line-height:4.6px">0</span></div>
<div class="a" style="left:26.4px;top:387.2px;width:4px;font-size:5px;color:#bcbcbc;text-align:center"><span style="display:block;height:4.6px;line-height:4.6px">3</span><span style="display:block;height:4.6px;line-height:4.6px">5</span></div>
<div class="a" style="left:26.4px;top:426.2px;width:4px;font-size:5px;color:#bcbcbc;text-align:center"><span style="display:block;height:4.6px;line-height:4.6px">4</span><span style="display:block;height:4.6px;line-height:4.6px">0</span></div>
<div class="a" style="left:26.4px;top:465.2px;width:4px;font-size:5px;color:#bcbcbc;text-align:center"><span style="display:block;height:4.6px;line-height:4.6px">4</span><span style="display:block;height:4.6px;line-height:4.6px">5</span></div>
<svg style="left:0;top:0" width="950" height="515"><path d="M35 61.4H916" stroke="#7c7c7c" stroke-width="0.7" stroke-dasharray="0.9 1.06" fill="none"/><path d="M34 62V503" stroke="#7c7c7c" stroke-width="0.7" stroke-dasharray="0.9 1.06" fill="none"/></svg>
<div class="a" style="left:25px;top:52px;width:9.5px;height:10px;background:#4b4b4b;"></div>
<svg style="left:25px;top:52px" width="10" height="10"><path d="M0 9.6h9.6M9.6 0v9.6" stroke="#6a6a6a" stroke-width="0.6" stroke-dasharray="1 1" fill="none"/></svg>
<div class="a" style="left:916px;top:52px;width:10.5px;height:463px;background:#484848;"></div>
<div class="a" style="left:926.5px;top:37px;width:0.8px;height:478px;background:#3a3a3a;"></div>
<div class="a" style="left:25px;top:503px;width:813px;height:10px;background:#4d4d4d;"></div>
<div class="a" style="left:25px;top:513px;width:925px;height:2px;background:#2b2b2b;"></div>
<div class="a" style="left:51px;top:503px;width:0.8px;height:10px;background:#3c3c3c;"></div>
<div class="t " style="left:31px;top:504.3px;font-size:5.6px">50%</div>
<div class="t " style="left:72px;top:504.3px;font-size:5.8px">文档:3.13M/3.53M</div>
<div class="t " style="left:146px;top:504.3px;font-size:8px;color:#c8c8c8">›</div>
<div class="a" style="left:354px;top:111.6px;width:241.6px;height:341.9px;background:#ffffff;"></div>
<svg style="left:0;top:0" width="950" height="515" font-family="'Liberation Sans',sans-serif" font-size="100">
<defs>
<linearGradient id="gA" x1="0" y1="0" x2="0.75" y2="1"><stop offset="0" stop-color="#f26cc8"/><stop offset="0.42" stop-color="#b45af4"/><stop offset="0.8" stop-color="#8080f6"/><stop offset="1" stop-color="#62b8f4"/></linearGradient>
<linearGradient id="gB" x1="0" y1="0" x2="0.3" y2="1"><stop offset="0" stop-color="#e2f04a"/><stop offset="0.45" stop-color="#80ee98"/><stop offset="1" stop-color="#50ccf6"/></linearGradient>
<linearGradient id="gE" gradientUnits="userSpaceOnUse" x1="20" y1="-76" x2="34" y2="7"><stop offset="0" stop-color="#a254f2"/><stop offset="0.3" stop-color="#9c5ef2"/><stop offset="0.46" stop-color="#ea60d2"/><stop offset="0.6" stop-color="#b45af4"/><stop offset="0.76" stop-color="#90f070"/><stop offset="1" stop-color="#dcf046"/></linearGradient>
<linearGradient id="gEh" gradientUnits="userSpaceOnUse" x1="10" y1="-70" x2="62" y2="0"><stop offset="0" stop-color="#a058f2"/><stop offset="0.24" stop-color="#9a60f2"/><stop offset="0.36" stop-color="#5cb0f4"/><stop offset="0.5" stop-color="#66bcf0"/><stop offset="0.63" stop-color="#74e0b0"/><stop offset="0.82" stop-color="#c8f050"/><stop offset="1" stop-color="#ecec3c"/></linearGradient>
<linearGradient id="gN" gradientUnits="userSpaceOnUse" x1="2" y1="-30" x2="70" y2="-40"><stop offset="0" stop-color="#a45cf2"/><stop offset="0.2" stop-color="#62bcf2"/><stop offset="0.36" stop-color="#7cf0a4"/><stop offset="0.68" stop-color="#8cf08c"/><stop offset="0.8" stop-color="#f48cc0"/><stop offset="1" stop-color="#e4e44c"/></linearGradient>
<linearGradient id="gS" gradientUnits="userSpaceOnUse" x1="40" y1="-77" x2="26" y2="8"><stop offset="0" stop-color="#a45af2"/><stop offset="0.26" stop-color="#8a6cf4"/><stop offset="0.46" stop-color="#7cf08c"/><stop offset="0.62" stop-color="#8cf084"/><stop offset="0.8" stop-color="#ec64dc"/><stop offset="1" stop-color="#c860ea"/></linearGradient>
<linearGradient id="gSh" gradientUnits="userSpaceOnUse" x1="0" y1="-77" x2="0" y2="8"><stop offset="0" stop-color="#5ca8f4"/><stop offset="0.35" stop-color="#64c8f0"/><stop offset="0.6" stop-color="#9cf470"/><stop offset="1" stop-color="#f078d0"/></linearGradient>
<linearGradient id="gD" gradientUnits="userSpaceOnUse" x1="20" y1="-76" x2="36" y2="7"><stop offset="0" stop-color="#62c8f2"/><stop offset="0.22" stop-color="#78e8c0"/><stop offset="0.5" stop-color="#b060f0"/><stop offset="1" stop-color="#c85ee8"/></linearGradient>
<linearGradient id="gT" gradientUnits="userSpaceOnUse" x1="0" y1="-70" x2="62" y2="-40"><stop offset="0" stop-color="#e8e060"/><stop offset="0.14" stop-color="#f078c8"/><stop offset="0.5" stop-color="#a85cf4"/><stop offset="0.8" stop-color="#7a8cf6"/><stop offset="1" stop-color="#5cc0f4"/></linearGradient>
<linearGradient id="gV" gradientUnits="userSpaceOnUse" x1="-4" y1="-40" x2="72" y2="-40"><stop offset="0" stop-color="#5cc4f2"/><stop offset="0.2" stop-color="#a060f2"/><stop offset="0.5" stop-color="#b05af4"/><stop offset="0.62" stop-color="#a8f070"/><stop offset="0.78" stop-color="#e8e860"/><stop offset="1" stop-color="#f070c8"/></linearGradient>
<linearGradient id="gX" gradientUnits="userSpaceOnUse" x1="0" y1="-71" x2="0" y2="2"><stop offset="0" stop-color="#a45cf2"/><stop offset="0.3" stop-color="#6c9cf4"/><stop offset="0.5" stop-color="#7ce8b0"/><stop offset="0.63" stop-color="#a8ec80"/><stop offset="0.72" stop-color="#e0e454"/><stop offset="0.84" stop-color="#f0a08c"/><stop offset="1" stop-color="#f078c0"/></linearGradient>
<filter id="goo" x="-5%" y="-5%" width="110%" height="110%" color-interpolation-filters="sRGB"><feGaussianBlur stdDeviation="1.3"/><feComponentTransfer><feFuncA type="linear" slope="8" intercept="-3.5"/></feComponentTransfer></filter>
<filter id="hl" x="-5%" y="-5%" width="110%" height="110%" color-interpolation-filters="sRGB"><feGaussianBlur in="SourceGraphic" stdDeviation="1.3" result="b0"/><feComponentTransfer in="b0" result="shape"><feFuncA type="linear" slope="8" intercept="-3.5"/></feComponentTransfer><feGaussianBlur in="shape" stdDeviation="3.8" result="bump"/><feDiffuseLighting in="bump" surfaceScale="10" diffuseConstant="1" lighting-color="#ffffff" result="lit"><feDistantLight azimuth="0" elevation="35"/></feDiffuseLighting><feColorMatrix in="lit" type="matrix" values="0 0 0 0 0  0 0 0 0 0  0 0 0 0 0  2.7 0 0 0 -1.5" result="w"/><feComposite in="shape" in2="w" operator="in"/></filter>
</defs>
<defs><g id="art" stroke-linejoin="round" aria-label="HAPPY VALENTINE&#39;S DAY !"><text transform="matrix(0.5614 0 0 0.5345 362.04 169.44)" style="fill:var(--c0);stroke:var(--c0)">H</text><text transform="matrix(0.5118 0 0 0.5317 409.96 168.96)" style="fill:var(--c0);stroke:var(--c0)">A</text><text transform="matrix(0.4756 0 0 0.5370 457.97 169.43)" style="fill:var(--c0);stroke:var(--c0)">P</text><text transform="matrix(0.4862 0 0 0.5370 506.96 169.43)" style="fill:var(--c0);stroke:var(--c0)">P</text><text transform="matrix(0.4697 0 0 0.5321 552.86 169.26)" style="fill:var(--c0);stroke:var(--c0)">Y</text><text transform="matrix(0.4908 0 0 0.5150 366.03 235.47)" style="fill:var(--cV);stroke:var(--cV)">V</text><text transform="matrix(0.5206 0 0 0.5268 410.01 235.59)" style="fill:var(--c0);stroke:var(--c0)">A</text><text transform="matrix(0.6146 0 0 0.5333 455.66 236.35)" style="fill:var(--c0);stroke:var(--c0)">L</text><text transform="matrix(0.5042 0 0 0.5333 505.23 236.35)" style="fill:var(--cE);stroke:var(--cE)">E</text><text transform="matrix(0.5440 0 0 0.5333 549.47 236.35)" style="fill:var(--cN);stroke:var(--cN)">N</text><text transform="matrix(0.5444 0 0 0.5028 363.76 300.35)" style="fill:var(--cT);stroke:var(--cT)">T</text><text transform="matrix(0.4902 0 0 0.4906 418.76 299.43)" style="fill:var(--c0);stroke:var(--c0)">I</text><text transform="matrix(0.5265 0 0 0.5236 455.19 302.41)" style="fill:var(--cN);stroke:var(--cN)">N</text><text transform="matrix(0.5042 0 0 0.5236 504.53 302.41)" style="fill:var(--cE);stroke:var(--cE)">E</text><text transform="matrix(0.3920 0 0 0.5023 548.58 300.91)" style="fill:var(--c0);stroke:var(--c0)">&#39;</text><text transform="matrix(0.4160 0 0 0.4932 558.22 300.32)" style="fill:var(--cS);stroke:var(--cS)">S</text><text transform="matrix(0.4970 0 0 0.5138 410.24 368.28)" style="fill:var(--cD);stroke:var(--cD)">D</text><text transform="matrix(0.5206 0 0 0.5268 456.81 368.79)" style="fill:var(--c0);stroke:var(--c0)">A</text><text transform="matrix(0.4684 0 0 0.5211 507.36 368.83)" style="fill:var(--c0);stroke:var(--c0)">Y</text><text transform="matrix(0.9280 0 0 0.5431 462.94 436.69)" stroke-width="3.0" style="fill:var(--cX);stroke:var(--cX)">!</text></g></defs>
<use href="#art" style="--c0:url(#gA);--cE:url(#gE);--cN:url(#gN);--cS:url(#gS);--cD:url(#gD);--cT:url(#gT);--cV:url(#gV);--cX:url(#gX)" stroke-width="12.94" filter="url(#goo)"/>
<use href="#art" style="--c0:url(#gB);--cE:url(#gEh);--cN:url(#gN);--cS:url(#gSh);--cD:url(#gB);--cT:url(#gB);--cV:url(#gV);--cX:url(#gX)" stroke-width="12.94" filter="url(#hl)"/>
</svg>
<div class="a" style="left:8px;top:20px;width:0.8px;height:13px;background:#474747;"></div>
<svg style="left:11.0px;top:20.0px" width="14" height="14" viewBox="-7.0 -7.0 14 14"><path d="M0-4.6l1.7 2h-1.1v2h2v-1.1l2 1.7-2 1.7v-1.1h-2v2h1.1l-1.7 2-1.7-2h1.1v-2h-2v1.1l-2-1.7 2-1.7v1.1h2v-2h-1.1z" fill="#dcdcdc"/></svg>
<svg style="left:26.5px;top:25.5px" width="6" height="4" viewBox="-3 -2 6 4"><path d="M-1.9 -0.9l1.9 1.8 1.9-1.8" fill="none" stroke="#b0b0b0" stroke-width="0.9"/></svg>
<div class="a" style="left:40px;top:23.2px;width:7.4px;height:7.4px;background:#e6e6e6;border-radius:1px"></div>
<svg style="left:40px;top:23.2px" width="7.4" height="7.4"><path d="M1.5 3.8l1.6 1.7 2.9-3.6" fill="none" stroke="#2a2a2a" stroke-width="1.3"/></svg>
<div class="t " style="left:51px;top:23.3px;font-size:6.8px">自动选择:</div>
<div class="a" style="left:87px;top:21.6px;width:31px;height:11px;background:#3d3d3d;border-radius:1.5px"></div>
<div class="t " style="left:91px;top:23.3px;font-size:6.8px">组</div>
<svg style="left:110.5px;top:25.5px" width="6" height="4" viewBox="-3 -2 6 4"><path d="M-1.9 -0.9l1.9 1.8 1.9-1.8" fill="none" stroke="#b0b0b0" stroke-width="0.9"/></svg>
<div class="a" style="left:128px;top:23.6px;width:6.6px;height:6.6px;background:#4a4a4a;border:0.7px solid #7a7a7a;border-radius:1px"></div>
<div class="t " style="left:139px;top:23.3px;font-size:6.6px">显示变换控件</div>
<div class="a" style="left:183px;top:21px;width:0.8px;height:12px;background:#474747;"></div>
<svg style="left:192.5px;top:22.8px" width="9" height="9" viewBox="-4.5 -4.5 9 9"><rect x="-3.6" y="-3.8" width="7.2" height="1" fill="#bcbcbc"/><rect x="-2.6" y="-2.2" width="2" height="6" fill="#bcbcbc"/><rect x="0.6" y="-2.2" width="2" height="3.6" fill="#bcbcbc"/></svg>
<svg style="left:207.0px;top:22.8px" width="9" height="9" viewBox="-4.5 -4.5 9 9"><rect x="-3.8" y="-0.5" width="7.6" height="1" fill="#bcbcbc"/><rect x="-2.6" y="-3.4" width="2" height="6.8" fill="#bcbcbc"/><rect x="0.6" y="-2" width="2" height="4" fill="#bcbcbc"/></svg>
<svg style="left:221.0px;top:22.8px" width="9" height="9" viewBox="-4.5 -4.5 9 9"><rect x="-3.6" y="2.8" width="7.2" height="1" fill="#bcbcbc"/><rect x="-2.6" y="-3.8" width="2" height="6" fill="#bcbcbc"/><rect x="0.6" y="-1.4" width="2" height="3.6" fill="#bcbcbc"/></svg>
<svg style="left:240.5px;top:22.8px" width="9" height="9" viewBox="-4.5 -4.5 9 9"><rect x="-3.8" y="-3.6" width="1" height="7.2" fill="#bcbcbc"/><rect x="-2.2" y="-2.6" width="6" height="2" fill="#bcbcbc"/><rect x="-2.2" y="0.6" width="3.6" height="2" fill="#bcbcbc"/></svg>
<svg style="left:254.5px;top:22.8px" width="9" height="9" viewBox="-4.5 -4.5 9 9"><rect x="-0.5" y="-3.8" width="1" height="7.6" fill="#bcbcbc"/><rect x="-3.4" y="-2.6" width="6.8" height="2" fill="#bcbcbc"/><rect x="-2" y="0.6" width="4" height="2" fill="#bcbcbc"/></svg>
<svg style="left:268.0px;top:22.8px" width="9" height="9" viewBox="-4.5 -4.5 9 9"><rect x="2.8" y="-3.6" width="1" height="7.2" fill="#bcbcbc"/><rect x="-3.8" y="-2.6" width="6" height="2" fill="#bcbcbc"/><rect x="-1.4" y="0.6" width="3.6" height="2" fill="#bcbcbc"/></svg>
<svg style="left:291.5px;top:22.8px" width="9" height="9" viewBox="-4.5 -4.5 9 9"><rect x="-3.8" y="-3.8" width="7.6" height="0.9" fill="#bcbcbc"/><rect x="-3.8" y="0" width="7.6" height="0.9" fill="#bcbcbc"/><rect x="-2" y="-2.9" width="4" height="1.8" fill="#bcbcbc"/><rect x="-2" y="0.9" width="4" height="1.8" fill="#bcbcbc"/></svg>
<svg style="left:306.0px;top:22.8px" width="9" height="9" viewBox="-4.5 -4.5 9 9"><rect x="-3.8" y="-2.4" width="7.6" height="0.9" fill="#bcbcbc"/><rect x="-3.8" y="1.6" width="7.6" height="0.9" fill="#bcbcbc"/><rect x="-2" y="-3.3" width="4" height="2.6" fill="#bcbcbc"/><rect x="-2" y="0.8" width="4" height="2.6" fill="#bcbcbc"/></svg>
<svg style="left:320.5px;top:22.8px" width="9" height="9" viewBox="-4.5 -4.5 9 9"><rect x="-3.8" y="-0.9" width="7.6" height="0.9" fill="#bcbcbc"/><rect x="-3.8" y="2.9" width="7.6" height="0.9" fill="#bcbcbc"/><rect x="-2" y="-2.7" width="4" height="1.8" fill="#bcbcbc"/><rect x="-2" y="1.1" width="4" height="1.8" fill="#bcbcbc"/></svg>
<svg style="left:338.5px;top:22.8px" width="9" height="9" viewBox="-4.5 -4.5 9 9"><rect x="-3.8" y="-3.8" width="0.9" height="7.6" fill="#bcbcbc"/><rect x="0" y="-3.8" width="0.9" height="7.6" fill="#bcbcbc"/><rect x="-2.9" y="-2" width="1.8" height="4" fill="#bcbcbc"/><rect x="0.9" y="-2" width="1.8" height="4" fill="#bcbcbc"/></svg>
<svg style="left:352.5px;top:22.8px" width="9" height="9" viewBox="-4.5 -4.5 9 9"><rect x="-2.4" y="-3.8" width="0.9" height="7.6" fill="#bcbcbc"/><rect x="1.6" y="-3.8" width="0.9" height="7.6" fill="#bcbcbc"/><rect x="-3.3" y="-2" width="2.6" height="4" fill="#bcbcbc"/><rect x="0.8" y="-2" width="2.6" height="4" fill="#bcbcbc"/></svg>
<svg style="left:366.5px;top:22.8px" width="9" height="9" viewBox="-4.5 -4.5 9 9"><rect x="-0.9" y="-3.8" width="0.9" height="7.6" fill="#bcbcbc"/><rect x="2.9" y="-3.8" width="0.9" height="7.6" fill="#bcbcbc"/><rect x="-2.7" y="-2" width="1.8" height="4" fill="#bcbcbc"/><rect x="1.1" y="-2" width="1.8" height="4" fill="#bcbcbc"/></svg>
<svg style="left:392.5px;top:22.8px" width="9" height="9" viewBox="-4.5 -4.5 9 9"><rect x="-3.2" y="-3.8" width="2.6" height="2" fill="#bcbcbc"/><rect x="0.6" y="-3.8" width="2.6" height="2" fill="#bcbcbc"/><rect x="-3.2" y="-1.2" width="2.6" height="2.4" fill="#bcbcbc"/><rect x="0.6" y="-1.2" width="2.6" height="2.4" fill="#bcbcbc"/><rect x="-3.2" y="1.8" width="2.6" height="2" fill="#bcbcbc"/><rect x="0.6" y="1.8" width="2.6" height="2" fill="#bcbcbc"/></svg>
<div class="a" style="left:284px;top:21px;width:0.8px;height:12px;background:#474747;"></div>
<div class="a" style="left:384px;top:21px;width:0.8px;height:12px;background:#474747;"></div>
<div class="a" style="left:407px;top:21px;width:0.8px;height:12px;background:#474747;"></div>
<div class="t " style="left:413px;top:23.3px;font-size:6.6px;color:#808080">3D 模式:</div>
<svg style="left:448.3px;top:22.8px" width="9" height="9" viewBox="-4.5 -4.5 9 9"><circle r="3.4" fill="none" stroke="#808080" stroke-width="1"/><ellipse rx="3.4" ry="1.4" fill="none" stroke="#808080" stroke-width="0.8" transform="rotate(-30)"/></svg>
<svg style="left:462.7px;top:22.8px" width="9" height="9" viewBox="-4.5 -4.5 9 9"><circle r="3.5" fill="none" stroke="#808080" stroke-width="1"/><circle r="1.5" fill="none" stroke="#808080" stroke-width="0.9"/><path d="M0-3.5v-1.2" stroke="#808080" stroke-width="1"/></svg>
<svg style="left:476.9px;top:22.8px" width="9" height="9" viewBox="-4.5 -4.5 9 9"><path d="M0-4.2l1.5 1.8h-1v1.9h1.9v-1l1.8 1.5-1.8 1.5v-1h-1.9v1.9h1l-1.5 1.8-1.5-1.8h1v-1.9h-1.9v1l-1.8-1.5 1.8-1.5v1h1.9v-1.9h-1z" fill="#808080"/></svg>
<svg style="left:491.5px;top:22.8px" width="9" height="9" viewBox="-4.5 -4.5 9 9"><path d="M0-4.2l1.5 1.8h-3zM0 4.2l1.5-1.8h-3zM-4.2 0l1.8-1.5v3zM4.2 0l-1.8-1.5v3z" fill="#808080"/><circle r="0.9" fill="#808080"/></svg>
<svg style="left:505.7px;top:22.8px" width="9" height="9" viewBox="-4.5 -4.5 9 9"><rect x="-4" y="-2" width="5.4" height="4" rx="0.6" fill="#808080"/><path d="M1.6 0l2.6-2v4z" fill="#808080"/></svg>
<svg style="left:906.0px;top:22.0px" width="10" height="10" viewBox="-5.0 -5.0 10 10"><circle cx="0.8" cy="-0.8" r="2.7" fill="none" stroke="#dcdcdc" stroke-width="1.1"/><path d="M-1.2 1.2l-2.6 2.6" stroke="#dcdcdc" stroke-width="1.3"/></svg>
<div class="a" style="left:920.3px;top:21px;width:0.8px;height:12px;background:#474747;"></div>
<svg style="left:924.3px;top:22.0px" width="10" height="10" viewBox="-5.0 -5.0 10 10"><rect x="-4" y="-3" width="8" height="6" fill="none" stroke="#dcdcdc" stroke-width="1"/><rect x="-3.4" y="-1.6" width="2.4" height="4" fill="#dcdcdc"/></svg>
<svg style="left:938.2px;top:25.3px" width="6" height="4" viewBox="-3 -2 6 4"><path d="M-1.9 -0.9l1.9 1.8 1.9-1.8" fill="none" stroke="#b0b0b0" stroke-width="0.9"/></svg>
<div class="a" style="left:90.4px;top:191.4px;width:167.2px;height:222.4px;background:#333333;"></div>
<div class="a" style="left:91px;top:192px;width:166px;height:7px;background:#424242;"></div>
<svg style="left:239.5px;top:194px" width="16" height="5"><path d="M2.2 0.9l-1.4 1.3 1.4 1.3M4.6 0.9l-1.4 1.3 1.4 1.3" stroke="#d0d0d0" stroke-width="1.15" fill="none"/><path d="M11 0.5l3 3M14 0.5l-3 3" stroke="#c4c4c4" stroke-width="0.9" fill="none"/></svg>
<div class="a" style="left:91px;top:199px;width:166px;height:15px;background:#424242;"></div>
<div class="a" style="left:91px;top:199px;width:23px;height:15px;background:#535353;"></div>
<div class="t " style="left:96px;top:202.5px;font-size:6.6px">属性</div>
<svg style="left:247.5px;top:204.5px" width="6" height="5"><path d="M0 0.6h5.6M0 2.1h5.6M0 3.6h5.6" stroke="#767676" stroke-width="1.1"/></svg>
<div class="a" style="left:91px;top:214px;width:166px;height:196px;background:#535353;"></div>
<div class="a" style="left:91px;top:233px;width:166px;height:0.8px;background:#454545;"></div>
<div class="a" style="left:96.6px;top:218px;width:11.4px;height:11.4px;background:#2c2c2c;"></div>
<svg style="left:96.6px;top:218px" width="11.4" height="11.4"><path d="M3.4 2.4h3l1.8 1.8v2.2h-2.4v2.4h-2.4z" fill="#e8e8e8"/><path d="M6.4 7h2.2v2.2h-2.2z" fill="#e8e8e8"/></svg>
<div class="t " style="left:113px;top:220.5px;font-size:6.5px">嵌入的智能对象</div>
<div class="t " style="left:96px;top:237px;font-size:6.3px;color:#c0c0c0">W:</div>
<div class="t " style="left:109px;top:237px;font-size:6.3px">28.96 厘米</div>
<div class="t " style="left:160px;top:237px;font-size:6.3px;color:#c0c0c0">H:</div>
<div class="t " style="left:171.5px;top:237px;font-size:6.3px">39.62 厘米</div>
<div class="t " style="left:98px;top:250.3px;font-size:6.3px;color:#c0c0c0">X:</div>
<div class="a" style="left:106px;top:249px;width:34.5px;height:10.6px;background:#3d3d3d;border:0.6px solid #5e5e5e"></div>
<div class="t " style="left:107.6px;top:250.3px;font-size:6.3px;color:#e8e8e8">0.98 厘米</div>
<div class="t " style="left:162px;top:250.3px;font-size:6.3px;color:#c0c0c0">Y:</div>
<div class="a" style="left:170px;top:249px;width:34.5px;height:10.6px;background:#3d3d3d;border:0.6px solid #5e5e5e"></div>
<div class="t " style="left:171.6px;top:250.3px;font-size:6.3px;color:#e8e8e8">2.11 厘米</div>
<div class="a" style="left:94px;top:263.6px;width:152px;height:0.8px;background:#484848;"></div>
<div class="t " style="left:96px;top:270.3px;font-size:6.5px">矢量智能对象 .ai</div>
<div class="a" style="left:96.4px;top:282.5px;width:146px;height:9.4px;background:#4b4b4b;border:0.6px solid #585858;border-radius:1.5px"></div>
<div class="t " style="left:100px;top:283.3px;font-size:6.2px;color:#7c7c7c">不应用图层复合</div>
<svg style="left:235px;top:285.4px" width="6" height="4" viewBox="-3 -2 6 4"><path d="M-1.9 -0.9l1.9 1.8 1.9-1.8" fill="none" stroke="#6e6e6e" stroke-width="0.9"/></svg>
<div class="a" style="left:94px;top:296px;width:152px;height:0.8px;background:#484848;"></div>
<div class="a" style="left:123.5px;top:302.6px;width:67.5px;height:10.4px;background:#424242;border:0.7px solid #636363"></div>
<div class="t" style="left:123.5px;top:303.9px;width:67.5px;text-align:center;font-size:6.3px;color:#e4e4e4">编辑内容</div>
<div class="a" style="left:123.5px;top:316px;width:67.5px;height:10.4px;background:#424242;border:0.7px solid #636363"></div>
<div class="t" style="left:123.5px;top:317.3px;width:67.5px;text-align:center;font-size:6.3px;color:#e4e4e4">转换为链接对象 ...</div>
<div class="a" style="left:248.6px;top:233.8px;width:8.4px;height:161px;background:#4d4d4d;"></div>
<div class="a" style="left:91px;top:409.8px;width:166px;height:3.6px;background:#5b5b5b;"></div>
<div class="a" style="left:91px;top:409.4px;width:166px;height:0.6px;background:#3e3e3e;"></div>
<div class="a" style="left:168px;top:411.2px;width:12px;height:0.8px;background:#454545;"></div>
<div class="a" style="left:927.3px;top:37px;width:20.2px;height:478px;background:#535353;"></div>
<div class="a" style="left:927.3px;top:37px;width:20.2px;height:8.6px;background:#424242;"></div>
<svg style="left:939px;top:38px" width="8" height="5"><path d="M2.2 0.9l-1.4 1.3 1.4 1.3M4.6 0.9l-1.4 1.3 1.4 1.3" stroke="#d0d0d0" stroke-width="1.15" fill="none"/></svg>
<div class="a" style="left:947.4px;top:0px;width:2.6px;height:515px;background:#3a3a3a;"></div>
<div class="a" style="left:949.4px;top:0px;width:0.6px;height:515px;background:#1c1c1c;"></div>
<div class="a" style="left:0px;top:0px;width:950px;height:1.2px;background:#2e2e2e;"></div>
<div class="a" style="left:0px;top:0px;width:1.3px;height:515px;background:#2e2e2e;"></div>
<div class="a" style="left:0px;top:0px;width:1.3px;height:1.2px;background:#e0e0e0;"></div>
<div class="a" style="left:931px;top:80.6px;width:16.5px;height:0.8px;background:#454545;"></div>
<div class="a" style="left:931px;top:118.6px;width:16.5px;height:0.8px;background:#454545;"></div>
<div class="a" style="left:931px;top:140.6px;width:16.5px;height:0.8px;background:#454545;"></div>
<div class="a" style="left:931px;top:163px;width:16.5px;height:0.8px;background:#454545;"></div>
<div class="a" style="left:931px;top:187px;width:16.5px;height:0.8px;background:#454545;"></div>
<div class="a" style="left:931px;top:209.6px;width:16.5px;height:0.8px;background:#454545;"></div>
<div class="a" style="left:931px;top:262px;width:16.5px;height:0.8px;background:#454545;"></div>
<svg style="left:931.7px;top:50.4px" width="12" height="12" viewBox="-6.0 -6.0 12 12"><g transform="scale(1.12 0.92)"><path d="M-4.8 0.8c0-2.6 2.2-4.2 5-4.2 2.6 0 4.6 1.3 4.6 3.3 0 1.5-1.3 2-2.4 1.7-1.1-0.3-1.7 0.4-1.5 1.3 0.2 0.9-0.5 1.5-1.8 1.5-2.2 0-3.9-1.5-3.9-3.6z" fill="#e0e0e0"/><circle cx="-2.4" cy="-0.2" r="0.8" fill="#535353"/><circle cx="-0.2" cy="-1.6" r="0.8" fill="#535353"/><circle cx="2.3" cy="-1" r="0.8" fill="#535353"/><circle cx="-2" cy="2.2" r="0.8" fill="#535353"/></g></svg>
<svg style="left:931.7px;top:65.5px" width="12" height="12" viewBox="-6.0 -6.0 12 12"><rect x="-4.2" y="-4.2" width="8.4" height="8.4" fill="none" stroke="#e0e0e0" stroke-width="1.2"/><path d="M-1.4-4v8M1.4-4v8M-4-1.4h8M-4 1.4h8" stroke="#e0e0e0" stroke-width="1"/></svg>
<svg style="left:931.7px;top:87.0px" width="12" height="12" viewBox="-6.0 -6.0 12 12"><rect x="-2" y="0" width="4" height="4.8" fill="#e0e0e0"/><path d="M0 0v-5M-3-3.8l1.6 3.6M3-3.8l-1.6 3.6" stroke="#e0e0e0" stroke-width="1.3"/><circle cx="0" cy="-4.6" r="0.9" fill="#e0e0e0"/><circle cx="-3" cy="-3.8" r="0.8" fill="#e0e0e0"/><circle cx="3" cy="-3.8" r="0.8" fill="#e0e0e0"/><rect x="-0.9" y="1.6" width="1.8" height="2" fill="#535353"/></svg>
<svg style="left:931.7px;top:103.0px" width="12" height="12" viewBox="-6.0 -6.0 12 12"><path d="M-4.8-2.6h9.6M-4.8 2.4h9.6" stroke="#e0e0e0" stroke-width="1.2"/><circle cx="-2.6" cy="-2.6" r="1.7" fill="#e0e0e0"/><path d="M1 2.4l3.8-2.4v4.8z" fill="#e0e0e0"/><circle cx="3.2" cy="2.4" r="2" fill="#e0e0e0"/></svg>
<svg style="left:931.7px;top:126.0px" width="12" height="12" viewBox="-6.0 -6.0 12 12"><path d="M-0.6-4.4h3l-0.6 3.2h2.2v2.2h-6.2v-2.2h2.2z" fill="#e0e0e0"/><rect x="-2" y="2" width="6" height="1.4" fill="#e0e0e0"/><path d="M-4.6-3.6h2M-4.6-2h2M-4.6-0.4h1.4" stroke="#e0e0e0" stroke-width="0.7"/></svg>
<svg style="left:931.7px;top:147.5px" width="12" height="12" viewBox="-6.0 -6.0 12 12"><path d="M-3.8-3.8l6.4 6.4M3.8-3.8l-6.4 6.4" stroke="#e0e0e0" stroke-width="1.2"/><circle cx="-3" cy="3" r="1.3" fill="none" stroke="#e0e0e0" stroke-width="0.9"/><circle cx="3" cy="3" r="1.3" fill="none" stroke="#e0e0e0" stroke-width="0.9"/></svg>
<svg style="left:931.7px;top:194.0px" width="12" height="12" viewBox="-6.0 -6.0 12 12"><path d="M2.6-2.6a3.7 3.7 0 1 0 1 3.4" fill="none" stroke="#e0e0e0" stroke-width="1.2"/><path d="M1.2 2.6l3.6-1-0.6 3.2z" fill="#e0e0e0"/></svg>
<svg style="left:931.7px;top:216.0px" width="12" height="12" viewBox="-6.0 -6.0 12 12"><path d="M0-4.4l4 2v4.6l-4 2.2-4-2.2v-4.6z" fill="none" stroke="#e0e0e0" stroke-width="1"/><path d="M0-0.4l4-2v4.6l-4 2.2z" fill="#e0e0e0" fill-opacity="0.55"/><path d="M-4-2.4l4 2 4-2M0-0.4v4.8" fill="none" stroke="#e0e0e0" stroke-width="0.9"/></svg>
<svg style="left:931.7px;top:231.5px" width="12" height="12" viewBox="-6.0 -6.0 12 12"><circle cx="0" cy="-1.6" r="2.6" fill="#e0e0e0" fill-opacity="0.55" stroke="#e0e0e0" stroke-width="0.9"/><circle cx="-1.9" cy="1.5" r="2.6" fill="#e0e0e0" fill-opacity="0.55" stroke="#e0e0e0" stroke-width="0.9"/><circle cx="1.9" cy="1.5" r="2.6" fill="#e0e0e0" fill-opacity="0.55" stroke="#e0e0e0" stroke-width="0.9"/></svg>
<svg style="left:931.7px;top:248.0px" width="12" height="12" viewBox="-6.0 -6.0 12 12"><path d="M-3.6 3.6c0-4 2-6.4 3.6-6.4s3.6 2.4 3.6 6.4" fill="none" stroke="#e0e0e0" stroke-width="1"/><path d="M-4.6-2.8h9.2" stroke="#e0e0e0" stroke-width="0.8"/><rect x="-1" y="-3.8" width="2" height="2" fill="#e0e0e0"/><rect x="-4.6" y="2.6" width="2" height="2" fill="#e0e0e0"/><rect x="2.6" y="2.6" width="2" height="2" fill="#e0e0e0"/><circle cx="-4.6" cy="-2.8" r="0.8" fill="#e0e0e0"/><circle cx="4.6" cy="-2.8" r="0.8" fill="#e0e0e0"/></svg>
<div class="t" style="left:934.6px;top:172.6px;height:10px;line-height:10px;font-size:9.2px;font-weight:bold;transform:scaleX(1.3);color:#e0e0e0">¶</div>
<div class="t" style="left:933.4px;top:270.6px;height:10px;line-height:10px;font-size:9.6px;color:#e0e0e0;letter-spacing:-0.3px">A|</div>
<div class="a" style="left:795.2px;top:45.2px;width:136.1px;height:303.4px;background:#333333;"></div>
<div class="a" style="left:796px;top:46px;width:134.5px;height:8px;background:#424242;"></div>
<svg style="left:912.8px;top:48.8px" width="16" height="5"><path d="M2.2 0.9l-1.4 1.3 1.4 1.3M4.6 0.9l-1.4 1.3 1.4 1.3" stroke="#d0d0d0" stroke-width="1.15" fill="none"/><path d="M11 0.5l3 3M14 0.5l-3 3" stroke="#c4c4c4" stroke-width="0.9" fill="none"/></svg>
<div class="a" style="left:796px;top:54px;width:134.5px;height:16.5px;background:#424242;"></div>
<div class="a" style="left:796px;top:54px;width:35px;height:16.5px;background:#535353;"></div>
<div class="t " style="left:801px;top:58.5px;font-size:6.6px">历史记录</div>
<svg style="left:921.5px;top:60px" width="6" height="5"><path d="M0 0.6h5.6M0 2.1h5.6M0 3.6h5.6" stroke="#767676" stroke-width="1.1"/></svg>
<div class="a" style="left:796px;top:70.5px;width:134.5px;height:54.5px;background:#4c4c4c;"></div>
<div class="a" style="left:796px;top:74.6px;width:125.5px;height:12.1px;background:#4c4c4c;"></div>
<div class="a" style="left:796px;top:86.69999999999999px;width:125.5px;height:0.6px;background:#434343;"></div>
<div class="a" style="left:799.6px;top:76.8px;width:7px;height:7px;background:transparent;border-left:0.7px solid #424242;border-bottom:0.7px solid #424242"></div>
<svg style="left:812.8px;top:76.19999999999999px" width="9" height="9"><path d="M0.6 1h3l0.9 1h3.9v6.2h-7.8z" fill="#cdcdcd"/><path d="M1.6 3.6h5.8M1.6 5h5.8M1.6 6.4h5.8" stroke="#8a8a8a" stroke-width="0.6"/></svg>
<div class="t " style="left:828px;top:76.69999999999999px;font-size:6.5px">自由变换</div>
<div class="a" style="left:796px;top:87.3px;width:125.5px;height:12.1px;background:#4c4c4c;"></div>
<div class="a" style="left:796px;top:99.39999999999999px;width:125.5px;height:0.6px;background:#434343;"></div>
<div class="a" style="left:799.6px;top:89.5px;width:7px;height:7px;background:transparent;border-left:0.7px solid #424242;border-bottom:0.7px solid #424242"></div>
<svg style="left:812.8px;top:88.89999999999999px" width="9" height="9"><path d="M0.6 1h3l0.9 1h3.9v6.2h-7.8z" fill="#cdcdcd"/><path d="M1.6 3.6h5.8M1.6 5h5.8M1.6 6.4h5.8" stroke="#8a8a8a" stroke-width="0.6"/></svg>
<div class="t " style="left:828px;top:89.39999999999999px;font-size:6.5px">更新智能对象</div>
<div class="a" style="left:796px;top:100.0px;width:125.5px;height:12.1px;background:#4c4c4c;"></div>
<div class="a" style="left:796px;top:112.1px;width:125.5px;height:0.6px;background:#434343;"></div>
<div class="a" style="left:799.6px;top:102.2px;width:7px;height:7px;background:transparent;border-left:0.7px solid #424242;border-bottom:0.7px solid #424242"></div>
<svg style="left:812.8px;top:101.6px" width="9" height="9"><path d="M0.6 1h3l0.9 1h3.9v6.2h-7.8z" fill="#cdcdcd"/><path d="M1.6 3.6h5.8M1.6 5h5.8M1.6 6.4h5.8" stroke="#8a8a8a" stroke-width="0.6"/></svg>
<div class="t " style="left:828px;top:102.1px;font-size:6.5px">删除图层</div>
<div class="a" style="left:796px;top:112.7px;width:125.5px;height:12.1px;background:#676767;"></div>
<div class="a" style="left:796px;top:124.8px;width:125.5px;height:0.6px;background:#434343;"></div>
<div class="a" style="left:799.6px;top:114.9px;width:7px;height:7px;background:transparent;border-left:0.7px solid #7c7c7c;border-bottom:0.7px solid #7c7c7c"></div>
<svg style="left:812.8px;top:114.3px" width="9" height="9"><path d="M0.6 1h3l0.9 1h3.9v6.2h-7.8z" fill="#cdcdcd"/><path d="M1.6 3.6h5.8M1.6 5h5.8M1.6 6.4h5.8" stroke="#8a8a8a" stroke-width="0.6"/></svg>
<div class="t " style="left:828px;top:114.8px;font-size:6.5px;color:#f0f0f0">删除图层</div>
<div class="a" style="left:796px;top:73.9px;width:134.5px;height:0.7px;background:#434343;"></div>
<div class="a" style="left:921.5px;top:70.5px;width:9px;height:54.5px;background:#4c4c4c;"></div>
<svg style="left:923px;top:75.5px" width="6" height="4"><path d="M0.8 3l2.2-2.2 2.2 2.2" fill="none" stroke="#7a7a7a" stroke-width="0.9"/></svg>
<div class="a" style="left:923.2px;top:110.6px;width:5.6px;height:5.2px;background:#6b6b6b;"></div>
<svg style="left:923px;top:117.6px" width="6" height="4"><path d="M0.8 0.8l2.2 2.2 2.2-2.2" fill="none" stroke="#7a7a7a" stroke-width="0.9"/></svg>
<div class="a" style="left:796px;top:125px;width:134.5px;height:13.4px;background:#535353;"></div>
<div class="a" style="left:796px;top:125px;width:134.5px;height:0.7px;background:#474747;"></div>
<svg style="left:872.5px;top:125.80000000000001px" width="11" height="11" viewBox="-5.5 -5.5 11 11"><path d="M-2.6-2.8h3.4l2.6 2.2v4h-6z" fill="#dadada"/><path d="M-4.6 1.6h3.6M-2.4-0.2l1.8 1.8-1.8 1.8" stroke="#535353" stroke-width="1.6" fill="none"/><path d="M-4.8 1.6h3.4M-2.6 0l1.6 1.6-1.6 1.6" stroke="#dadada" stroke-width="0.9" fill="none"/></svg>
<svg style="left:890.5px;top:125.80000000000001px" width="11" height="11" viewBox="-5.5 -5.5 11 11"><path d="M-4.2-2h1.8l0.8-1.2h3.2l0.8 1.2h1.8v5.2h-8.4z" fill="#dadada"/><circle cy="0.5" r="1.7" fill="#535353"/><circle cy="0.5" r="0.8" fill="#dadada"/></svg>
<svg style="left:905.5px;top:125.9px" width="11" height="11" viewBox="-5.5 -5.5 11 11"><path d="M-3.2-2.6h6.4M-1.2-3.6h2.4" stroke="#a8a8a8" stroke-width="0.9"/><path d="M-2.6-1.6h5.2l-0.5 5.6h-4.2z" fill="#a8a8a8"/><path d="M-0.9-0.6v3.6M0.9-0.6v3.6" stroke="#535353" stroke-width="0.6"/></svg>
<div class="a" style="left:796px;top:138.4px;width:134.5px;height:1.8px;background:#383838;"></div>
<div class="a" style="left:796px;top:140.2px;width:134.5px;height:15.6px;background:#424242;"></div>
<div class="a" style="left:796px;top:140.2px;width:23.4px;height:15.6px;background:#535353;"></div>
<div class="t " style="left:801.6px;top:144.4px;font-size:6.6px">图层</div>
<svg style="left:921.5px;top:146px" width="6" height="5"><path d="M0 0.6h5.6M0 2.1h5.6M0 3.6h5.6" stroke="#767676" stroke-width="1.1"/></svg>
<div class="a" style="left:796px;top:155.8px;width:134.5px;height:174px;background:#535353;"></div>
<div class="a" style="left:799.6px;top:159.4px;width:46px;height:11px;background:#3d3d3d;border-radius:1.5px"></div>
<svg style="left:801.0px;top:161.0px" width="8" height="8" viewBox="-4.0 -4.0 8 8"><circle cx="0.7" cy="-0.7" r="2" fill="none" stroke="#dadada" stroke-width="0.9"/><path d="M-0.8 0.8l-2 2" stroke="#dadada" stroke-width="1"/></svg>
<div class="t " style="left:810.6px;top:161.2px;font-size:6.5px">类型</div>
<svg style="left:838.4px;top:163.2px" width="6" height="4" viewBox="-3 -2 6 4"><path d="M-1.9 -0.9l1.9 1.8 1.9-1.8" fill="none" stroke="#b0b0b0" stroke-width="0.9"/></svg>
<svg style="left:852.5px;top:160.5px" width="9" height="9" viewBox="-4.5 -4.5 9 9"><rect x="-3.4" y="-2.8" width="6.8" height="5.6" fill="none" stroke="#dadada" stroke-width="0.9"/><path d="M-2.4 1.8l1.6-2 1.2 1.2 0.8-0.8 1.2 1.6z" fill="#dadada"/></svg>
<svg style="left:866.5px;top:160.5px" width="9" height="9" viewBox="-4.5 -4.5 9 9"><circle r="3.2" fill="none" stroke="#dadada" stroke-width="0.9"/><path d="M-2.3 2.3a3.2 3.2 0 0 1 4.6-4.6z" fill="#dadada"/></svg>
<div class="t" style="left:881.4px;top:161.3px;height:10px;line-height:10px;font-family:'Liberation Serif',serif;font-weight:bold;font-size:8px;color:#dadada">T</div>
<svg style="left:892.9px;top:160.5px" width="9" height="9" viewBox="-4.5 -4.5 9 9"><rect x="-2.6" y="-2.6" width="5.2" height="5.2" fill="none" stroke="#dadada" stroke-width="0.9"/><rect x="-3.7" y="-3.7" width="2" height="2" fill="#dadada"/><rect x="1.7" y="-3.7" width="2" height="2" fill="#dadada"/><rect x="-3.7" y="1.7" width="2" height="2" fill="#dadada"/><rect x="1.7" y="1.7" width="2" height="2" fill="#dadada"/></svg>
<svg style="left:905.9px;top:160.5px" width="9" height="9" viewBox="-4.5 -4.5 9 9"><path d="M-2.8-3.6h3.4l2.2 2.2v5h-5.6z" fill="none" stroke="#dadada" stroke-width="0.9"/><rect x="-3.6" y="0.4" width="3.6" height="3.6" fill="#dadada"/></svg>
<div class="a" style="left:923.1px;top:161px;width:5px;height:5px;background:#e4e4e4;border-radius:50%"></div>
<div class="a" style="left:925.2px;top:166px;width:0.8px;height:3px;background:#8a8a8a;"></div>
<div class="a" style="left:796px;top:173px;width:134.5px;height:0.7px;background:#484848;"></div>
<div class="a" style="left:799.6px;top:176.0px;width:63px;height:9.6px;background:#3d3d3d;border-radius:1.5px"></div>
<div class="t " style="left:803px;top:177.1px;font-size:6.5px">正常</div>
<svg style="left:855.6px;top:179.1px" width="6" height="4" viewBox="-3 -2 6 4"><path d="M-1.9 -0.9l1.9 1.8 1.9-1.8" fill="none" stroke="#b0b0b0" stroke-width="0.9"/></svg>
<div class="t " style="left:867.6px;top:177.1px;font-size:6.4px">不透明度:</div>
<div class="a" style="left:897.6px;top:176.0px;width:21.4px;height:9.6px;background:#464646;"></div>
<div class="t " style="left:899.2px;top:177.1px;font-size:6.3px;color:#ececec">100%</div>
<div class="a" style="left:920px;top:176.0px;width:8px;height:9.6px;background:#505050;border:0.6px solid #6a6a6a"></div>
<svg style="left:921px;top:179.3px" width="6" height="4" viewBox="-3 -2 6 4"><path d="M-1.6 -0.9l1.6 1.8 1.6-1.8" fill="none" stroke="#c0c0c0" stroke-width="0.9"/></svg>
<div class="t " style="left:800px;top:192.2px;font-size:6.4px">锁定:</div>
<svg style="left:819.0px;top:192.0px" width="8" height="8" viewBox="-4.0 -4.0 8 8"><rect x="-2.8" y="-2.8" width="5.6" height="5.6" fill="none" stroke="#dadada" stroke-width="0.8" stroke-dasharray="1.2 0.8"/><path d="M-1.4-1.4h1.4v1.4h-1.4zM0 0h1.4v1.4h-1.4z" fill="#dadada"/></svg>
<svg style="left:831.6px;top:192.0px" width="8" height="8" viewBox="-4.0 -4.0 8 8"><path d="M3.2-3.6l0.6 0.6-3.8 4.2-1-1z" fill="#dadada"/><path d="M-1.4 0.8l1 1c-0.4 1.2-1.6 1.6-3 1.4 0.7-0.4 0.6-1 0.8-1.5 0.2-0.5 0.7-0.9 1.2-0.9z" fill="#dadada"/></svg>
<svg style="left:843.4px;top:192.0px" width="8" height="8" viewBox="-4.0 -4.0 8 8"><path d="M0-3.8l1.4 1.6h-0.9v1.7h1.7v-0.9l1.6 1.4-1.6 1.4v-0.9h-1.7v1.7h0.9l-1.4 1.6-1.4-1.6h0.9v-1.7h-1.7v0.9l-1.6-1.4 1.6-1.4v0.9h1.7v-1.7h-0.9z" fill="#dadada"/></svg>
<svg style="left:855.4px;top:192.0px" width="8" height="8" viewBox="-4.0 -4.0 8 8"><path d="M-2-3.8v6h6M-3.8-2h6v6" fill="none" stroke="#dadada" stroke-width="0.9"/><path d="M2.4-3.4l1.4 1.4" stroke="#dadada" stroke-width="0.8"/></svg>
<svg style="left:867.6px;top:192.0px" width="8" height="8" viewBox="-4.0 -4.0 8 8"><rect x="-2.8" y="-0.6" width="5.6" height="4.2" rx="0.5" fill="#dadada"/><path d="M-1.6-0.6v-1.2a1.6 1.6 0 0 1 3.2 0v1.2" fill="none" stroke="#dadada" stroke-width="0.9"/></svg>
<div class="t " style="left:880px;top:192.2px;font-size:6.4px">填充:</div>
<div class="a" style="left:897.6px;top:191.0px;width:21.4px;height:9.6px;background:#464646;"></div>
<div class="t " style="left:899.2px;top:192.2px;font-size:6.3px;color:#ececec">100%</div>
<div class="a" style="left:920px;top:191.0px;width:8px;height:9.6px;background:#505050;border:0.6px solid #6a6a6a"></div>
<svg style="left:921px;top:194.4px" width="6" height="4" viewBox="-3 -2 6 4"><path d="M-1.6 -0.9l1.6 1.8 1.6-1.8" fill="none" stroke="#c0c0c0" stroke-width="0.9"/></svg>
<div class="a" style="left:796px;top:202.6px;width:134.5px;height:0.7px;background:#474747;"></div>
<div class="a" style="left:796px;top:203.3px;width:125.5px;height:126px;background:#4d4d4d;"></div>
<div class="a" style="left:921.5px;top:203.3px;width:9px;height:126px;background:#4d4d4d;"></div>
<div class="a" style="left:796px;top:203.6px;width:15.6px;height:20.6px;background:#535353;"></div>
<div class="a" style="left:811.6px;top:203.6px;width:109.9px;height:20.6px;background:#6b6b6b;"></div>
<div class="a" style="left:796px;top:224.2px;width:125.5px;height:0.8px;background:#454545;"></div>
<div class="a" style="left:796px;top:225px;width:125.5px;height:21px;background:#535353;"></div>
<div class="a" style="left:796px;top:246px;width:125.5px;height:0.8px;background:#454545;"></div>
<div class="a" style="left:811.2px;top:203.6px;width:0.7px;height:42.4px;background:#454545;"></div>
<svg style="left:799.0px;top:210.0px" width="10" height="8" viewBox="-5.0 -4.0 10 8"><path d="M-4 0c1.2-1.8 2.6-2.6 4-2.6s2.8 0.8 4 2.6c-1.2 1.8-2.6 2.6-4 2.6s-2.8-0.8-4-2.6z" fill="#eeeeee"/><circle r="1.4" fill="#3a3a3a"/><circle r="0.6" fill="#eee"/></svg>
<svg style="left:799.0px;top:232.0px" width="10" height="8" viewBox="-5.0 -4.0 10 8"><path d="M-4 0c1.2-1.8 2.6-2.6 4-2.6s2.8 0.8 4 2.6c-1.2 1.8-2.6 2.6-4 2.6s-2.8-0.8-4-2.6z" fill="#eeeeee"/><circle r="1.4" fill="#3a3a3a"/><circle r="0.6" fill="#eee"/></svg>
<div class="a" style="left:814px;top:205px;width:15.4px;height:18px;background:#f4f4f8;border:0.7px solid #d8d8d8"></div>
<svg style="left:814px;top:205px" width="15.4" height="18"><g fill="#a79ad8"><rect x="3.4" y="2.6" width="2.2" height="2"/><rect x="6.4" y="2.6" width="2" height="2"/><rect x="9.2" y="2.6" width="2.2" height="2"/><rect x="3.4" y="5.8" width="2.2" height="2"/><rect x="6.6" y="5.8" width="3.4" height="2"/><rect x="3.4" y="9" width="2.4" height="2"/><rect x="6.8" y="9" width="2.2" height="2"/><rect x="5" y="12.2" width="3" height="2"/></g><path d="M0.8 3.6v-2.8h2.8M11.8 0.8h2.8v2.8M0.8 14.4v2.8h2.8M11.8 17.2h2.8v-2.8" fill="none" stroke="#555" stroke-width="0.8" stroke-dasharray="1.2 0.8"/><rect x="9.2" y="11.4" width="5" height="5.4" fill="#3a3a3a"/><path d="M10.4 12.4h2l0.9 0.9v2.6h-2.9z" fill="#f0f0f0"/></svg>
<div class="t " style="left:833px;top:210.2px;font-size:6.5px;color:#f0f0f0">矢量智能对象</div>
<div class="a" style="left:815px;top:227.6px;width:13.4px;height:16.6px;background:#ffffff;border:0.6px solid #bdbdbd"></div>
<div class="t " style="left:833px;top:232.6px;font-size:6.5px">背景</div>
<svg style="left:905.6px;top:230.7px" width="8" height="9" viewBox="-4.0 -4.5 8 9"><rect x="-2.6" y="-0.8" width="5.2" height="4" rx="0.5" fill="none" stroke="#dadada" stroke-width="0.9"/><path d="M-1.5-0.8v-1.2a1.5 1.5 0 0 1 3 0v1.2" fill="none" stroke="#dadada" stroke-width="0.9"/><rect x="-0.4" y="0.6" width="0.8" height="1.4" fill="#dadada"/></svg>
<div class="a" style="left:796px;top:329.2px;width:134.5px;height:0.8px;background:#454545;"></div>
<div class="a" style="left:796px;top:330px;width:134.5px;height:14.2px;background:#535353;"></div>
<svg style="left:817.0px;top:333.5px" width="10" height="8" viewBox="-5.0 -4.0 10 8"><rect x="-4.2" y="-1.5" width="4" height="3" rx="1.5" fill="none" stroke="#8e8e8e" stroke-width="0.9"/><rect x="0.2" y="-1.5" width="4" height="3" rx="1.5" fill="none" stroke="#8e8e8e" stroke-width="0.9"/></svg>
<div class="t" style="left:833.4px;top:332.6px;height:9px;line-height:9px;font-family:'Liberation Serif',serif;font-style:italic;font-weight:bold;font-size:8.4px;color:#dadada">fx</div>
<div class="a" style="left:842.4px;top:341.2px;width:1.2px;height:1.2px;background:#d0d0d0;"></div>
<svg style="left:847.0px;top:333.2px" width="10" height="8" viewBox="-5.0 -4.0 10 8"><rect x="-3.8" y="-2.8" width="7.6" height="5.6" fill="#dadada"/><circle r="1.7" fill="#3f3f3f"/></svg>
<svg style="left:862.0px;top:333.2px" width="10" height="8" viewBox="-5.0 -4.0 10 8"><circle r="3.2" fill="none" stroke="#dadada" stroke-width="0.9"/><path d="M-2.3 2.3a3.2 3.2 0 0 1 4.6-4.6z" fill="#dadada"/></svg>
<div class="a" style="left:871.6px;top:341.2px;width:1.2px;height:1.2px;background:#d0d0d0;"></div>
<svg style="left:876.5px;top:333.2px" width="10" height="8" viewBox="-5.0 -4.0 10 8"><path d="M-3.8-2.8h2.8l0.9 1h3.9v4.6h-7.6z" fill="#dadada"/></svg>
<svg style="left:891.7px;top:333.2px" width="10" height="8" viewBox="-5.0 -4.0 10 8"><path d="M-3.2-3.2h6.4v6.4h-3.6l-2.8-2.8z" fill="none" stroke="#dadada" stroke-width="0.9"/><path d="M-3.2 0.4h2.8v2.8" fill="none" stroke="#dadada" stroke-width="0.8"/></svg>
<svg style="left:905.5px;top:331.9px" width="11" height="11" viewBox="-5.5 -5.5 11 11"><path d="M-3.2-2.6h6.4M-1.2-3.6h2.4" stroke="#d0d0d0" stroke-width="0.9"/><path d="M-2.6-1.6h5.2l-0.5 5.6h-4.2z" fill="#d0d0d0"/><path d="M-0.9-0.6v3.6M0.9-0.6v3.6" stroke="#535353" stroke-width="0.6"/></svg>
<div class="a" style="left:796px;top:344.2px;width:134.5px;height:3.8px;background:#5b5b5b;"></div>
<div class="a" style="left:796px;top:344.2px;width:134.5px;height:0.6px;background:#3e3e3e;"></div>
<div class="a" style="left:857px;top:346px;width:12px;height:0.8px;background:#454545;"></div>
<svg style="left:0;top:0" width="950" height="515"><path d="M721.5 199.0 L797.6 213.7 L796.6 215.1 L804.2 213.9 L797.5 210.0 L798.0 211.7 L721.5 198.6Z" fill="#e0222e"/></svg>
</div>
<!--TOOLS-->
<!--RULERS-->
<!--DOC-->
<!--PROPS-->
<!--RIGHT-->
<!--OPTS-->
</body></html>
